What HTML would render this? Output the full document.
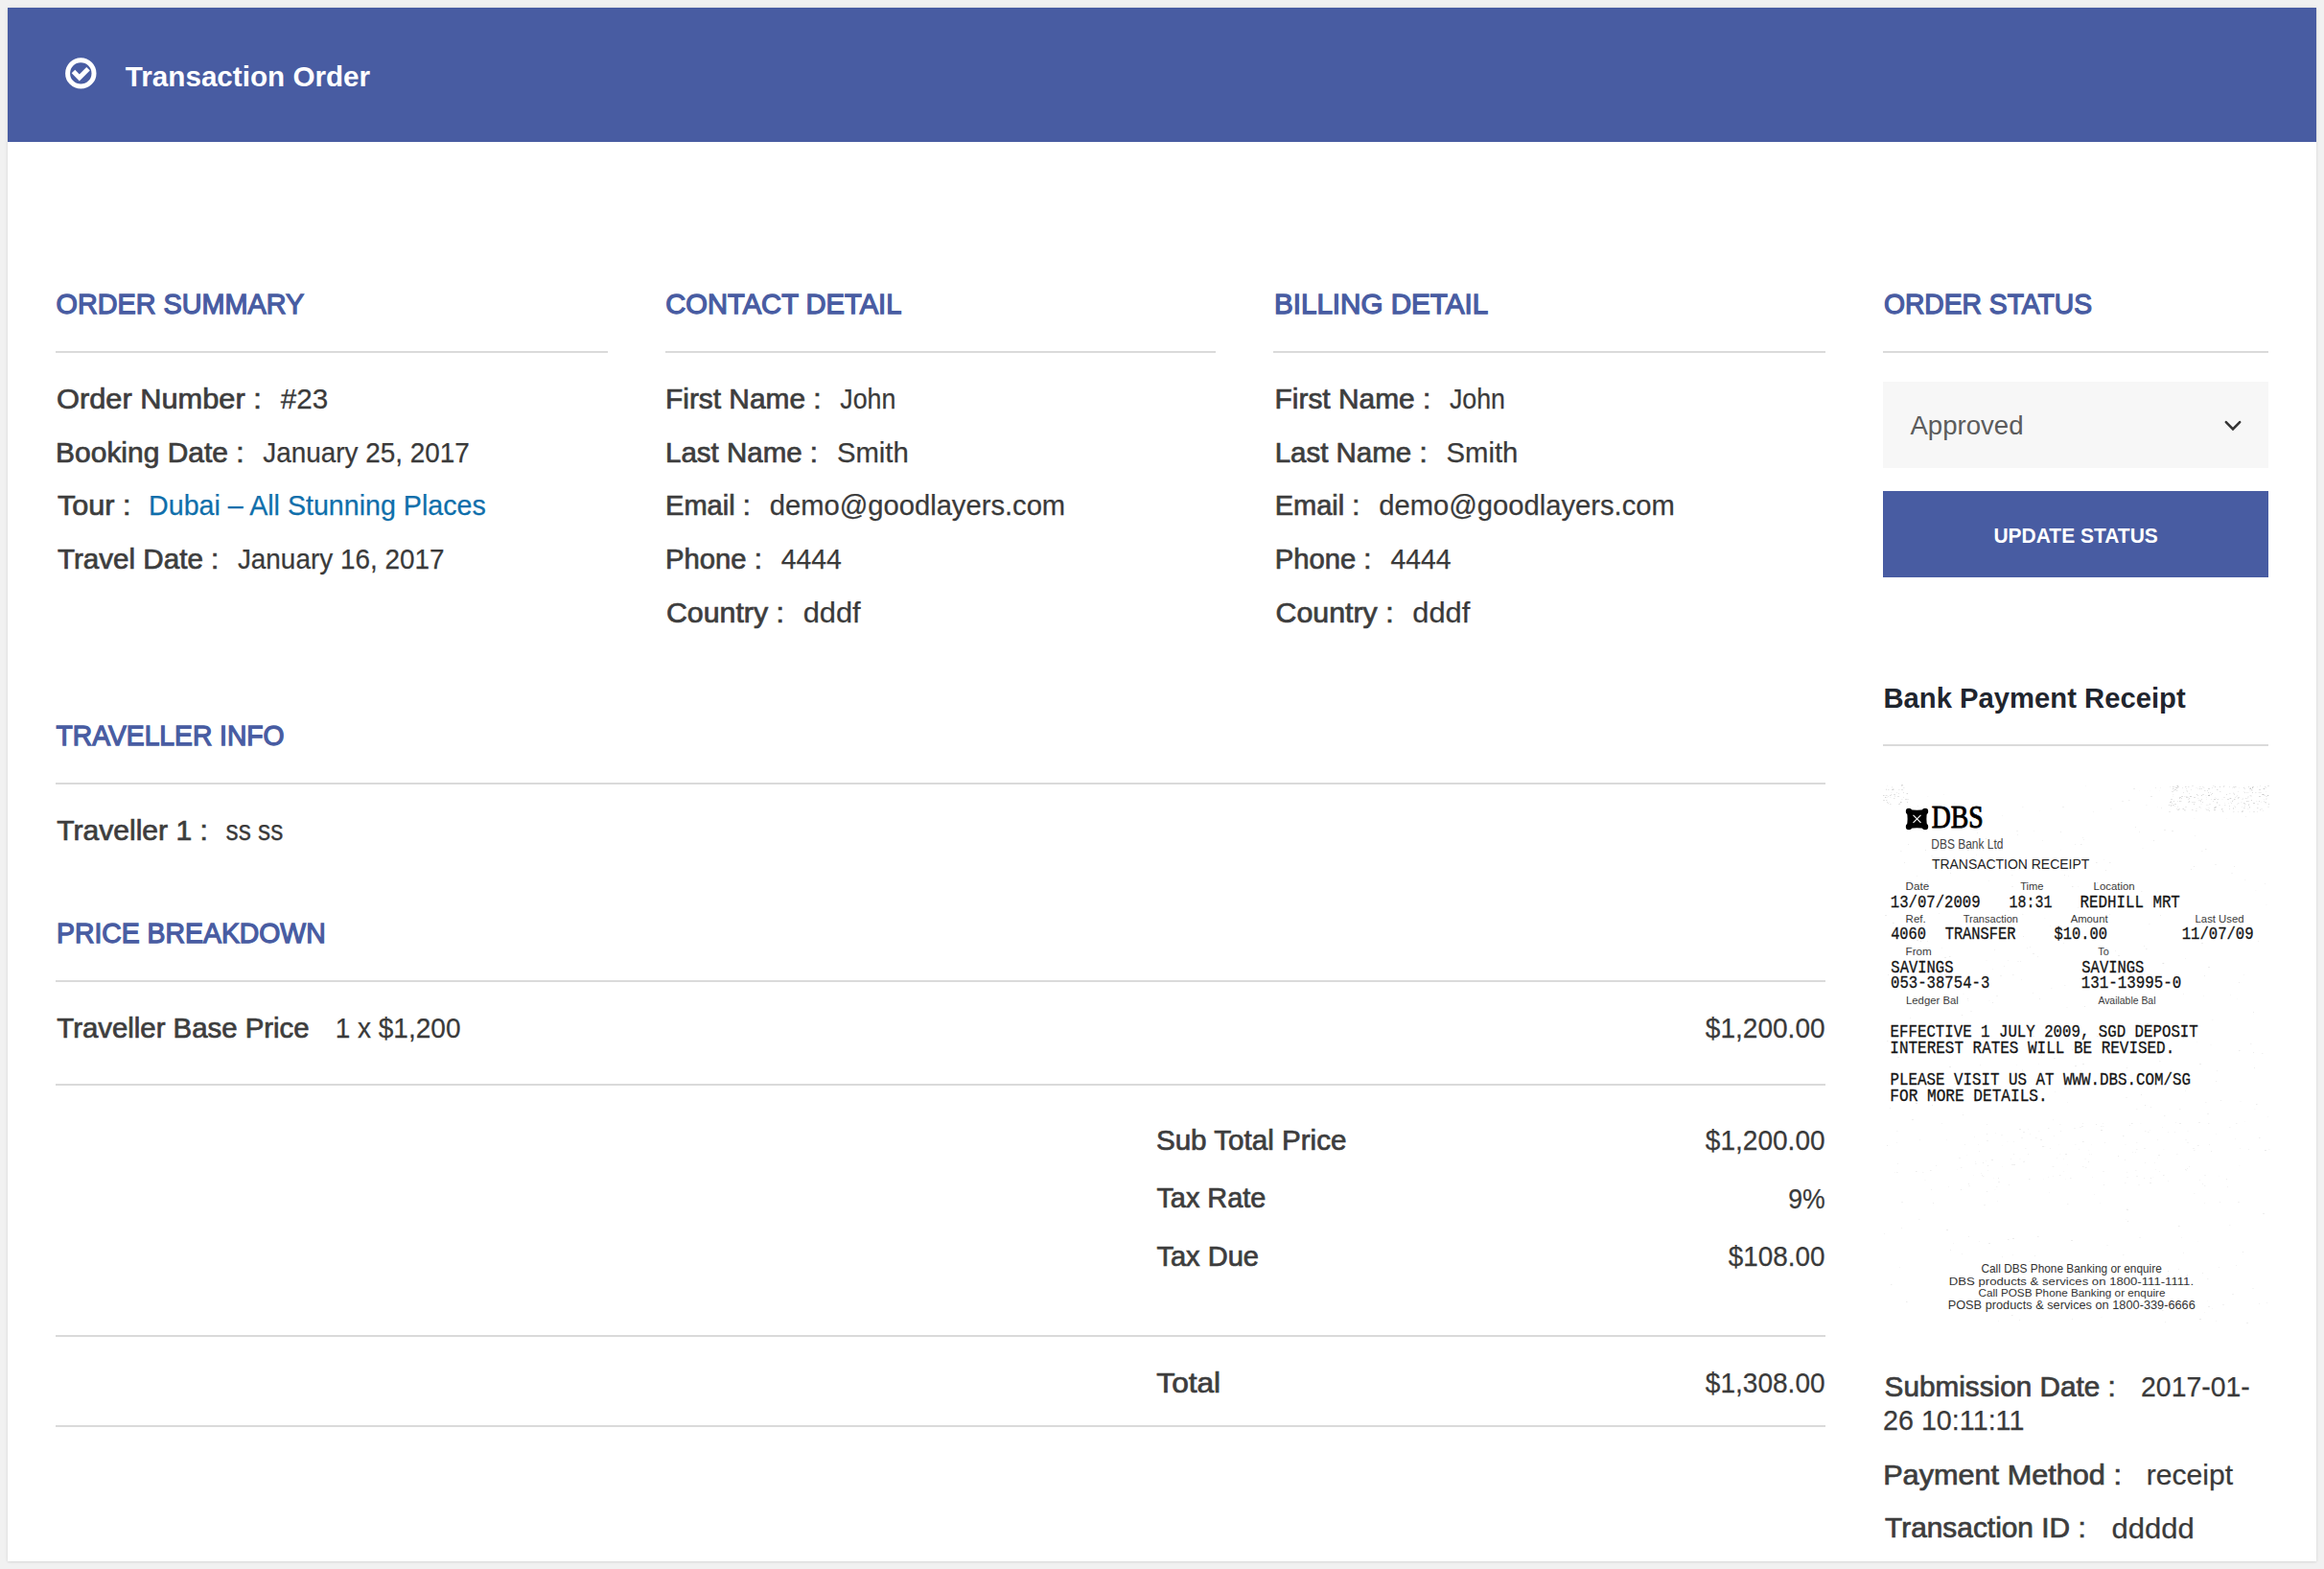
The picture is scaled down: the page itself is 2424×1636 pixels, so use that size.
<!DOCTYPE html>
<html>
<head>
<meta charset="utf-8">
<title>Transaction Order</title>
<style>
html,body{margin:0;padding:0;}
body{width:2424px;height:1636px;background:#f1f1f1;position:relative;overflow:hidden;font-family:"Liberation Sans",sans-serif;}
.box{position:absolute;left:8px;top:8px;width:2408px;height:1620px;background:#fff;box-shadow:0 0 4px rgba(0,0,0,0.09),0 1px 2px rgba(0,0,0,0.06);}
.hdr{position:absolute;left:8px;top:8px;width:2408px;height:140px;background:#485ca2;}
.ln{position:absolute;height:2px;background:#dadada;}
.sel{position:absolute;left:1964px;top:398px;width:402px;height:90px;background:#f7f7f7;}
.btn{position:absolute;left:1964px;top:512px;width:402px;height:90px;background:#485ca2;}
.rcpt{position:absolute;left:1964px;top:818px;width:402px;height:562px;background:#fff;}
svg.t{position:absolute;left:0;top:0;}
</style>
</head>
<body>
<div class="box"></div>
<div class="hdr"></div>
<div class="ln" style="left:58px;top:366px;width:576px"></div>
<div class="ln" style="left:694px;top:366px;width:574px"></div>
<div class="ln" style="left:1328px;top:366px;width:576px"></div>
<div class="ln" style="left:1964px;top:366px;width:402px"></div>
<div class="ln" style="left:58px;top:816px;width:1846px"></div>
<div class="ln" style="left:58px;top:1022px;width:1846px"></div>
<div class="ln" style="left:58px;top:1130px;width:1846px"></div>
<div class="ln" style="left:58px;top:1392px;width:1846px"></div>
<div class="ln" style="left:58px;top:1486px;width:1846px"></div>
<div class="ln" style="left:1964px;top:776px;width:402px"></div>
<div class="sel"></div>
<div class="btn"></div>
<div class="rcpt"></div>
<svg class="t" width="2424" height="1636" viewBox="0 0 2424 1636" font-family="Liberation Sans, sans-serif">
<circle cx="84.3" cy="76.4" r="13.7" fill="none" stroke="#fff" stroke-width="5"/>
<path d="M76.5 74.6 L82.8 80.9 L92 71.7" fill="none" stroke="#fff" stroke-width="5"/>
<path d="M2321.8 440.2 L2329 447.4 L2336.2 440.2" fill="none" stroke="#333" stroke-width="2.5" stroke-linecap="round"/>
<g fill="#000">
<path d="M1990 845 Q1999.5 847.5 2009 845 Q2006.8 854 2009 863 Q1999.5 860.5 1990 863 Q1992.2 854 1990 845 Z" stroke="#000" stroke-width="3" stroke-linejoin="round"/>
<circle cx="1991" cy="846" r="3.2"/><circle cx="2008" cy="846" r="3.2"/><circle cx="1991" cy="862" r="3.2"/><circle cx="2008" cy="862" r="3.2"/>
</g>
<path d="M1995.5 849.8 L2003.5 857.8 M2003.5 849.8 L1995.5 857.8" stroke="#fff" stroke-width="1.1"/>
<g fill="#000"><rect x="2296" y="822" width="1" height="1" fill-opacity="0.11"/><rect x="2347" y="821" width="1" height="1" fill-opacity="0.10"/><rect x="2266" y="830" width="1" height="1" fill-opacity="0.04"/><rect x="2319" y="820" width="1" height="1" fill-opacity="0.10"/><rect x="2328" y="834" width="2" height="1" fill-opacity="0.04"/><rect x="2267" y="824" width="1" height="1" fill-opacity="0.10"/><rect x="2292" y="822" width="1.5" height="1" fill-opacity="0.04"/><rect x="2320" y="837" width="1" height="1" fill-opacity="0.04"/><rect x="2301" y="833" width="1" height="1" fill-opacity="0.04"/><rect x="2326" y="832" width="1.5" height="1" fill-opacity="0.10"/><rect x="2310" y="844" width="1" height="1" fill-opacity="0.07"/><rect x="2345" y="838" width="1.5" height="1" fill-opacity="0.06"/><rect x="2317" y="843" width="1.5" height="1" fill-opacity="0.12"/><rect x="2325" y="820" width="1" height="1" fill-opacity="0.09"/><rect x="2341" y="822" width="1" height="1" fill-opacity="0.09"/><rect x="2362" y="820" width="1.5" height="1" fill-opacity="0.10"/><rect x="2297" y="828" width="2" height="1" fill-opacity="0.09"/><rect x="2269" y="821" width="1" height="1" fill-opacity="0.06"/><rect x="2268" y="838" width="2" height="1" fill-opacity="0.11"/><rect x="2292" y="829" width="1" height="1" fill-opacity="0.11"/><rect x="2360" y="828" width="2" height="1" fill-opacity="0.10"/><rect x="2268" y="840" width="1" height="1" fill-opacity="0.05"/><rect x="2303" y="844" width="1" height="1" fill-opacity="0.09"/><rect x="2309" y="833" width="2" height="1" fill-opacity="0.14"/><rect x="2352" y="826" width="1.5" height="1" fill-opacity="0.08"/><rect x="2333" y="829" width="1" height="1" fill-opacity="0.06"/><rect x="2280" y="824" width="2" height="1" fill-opacity="0.06"/><rect x="2348" y="823" width="1" height="1" fill-opacity="0.07"/><rect x="2306" y="828" width="1" height="1" fill-opacity="0.10"/><rect x="2334" y="832" width="1" height="1" fill-opacity="0.10"/><rect x="2309" y="842" width="2" height="1" fill-opacity="0.14"/><rect x="2303" y="829" width="2" height="1" fill-opacity="0.09"/><rect x="2268" y="820" width="1" height="1" fill-opacity="0.05"/><rect x="2273" y="835" width="1" height="1" fill-opacity="0.04"/><rect x="2318" y="845" width="1" height="1" fill-opacity="0.10"/><rect x="2353" y="835" width="1.5" height="1" fill-opacity="0.05"/><rect x="2361" y="835" width="1" height="1" fill-opacity="0.08"/><rect x="2350" y="846" width="2" height="1" fill-opacity="0.08"/><rect x="2294" y="822" width="1.5" height="1" fill-opacity="0.12"/><rect x="2312" y="837" width="1" height="1" fill-opacity="0.09"/><rect x="2361" y="833" width="1" height="1" fill-opacity="0.05"/><rect x="2341" y="826" width="1" height="1" fill-opacity="0.11"/><rect x="2334" y="825" width="1" height="1" fill-opacity="0.07"/><rect x="2299" y="824" width="1.5" height="1" fill-opacity="0.10"/><rect x="2328" y="835" width="1" height="1" fill-opacity="0.13"/><rect x="2346" y="841" width="1" height="1" fill-opacity="0.12"/><rect x="2283" y="832" width="1" height="1" fill-opacity="0.12"/><rect x="2344" y="831" width="1.5" height="1" fill-opacity="0.05"/><rect x="2309" y="844" width="1.5" height="1" fill-opacity="0.15"/><rect x="2270" y="821" width="1.5" height="1" fill-opacity="0.08"/><rect x="2283" y="835" width="1" height="1" fill-opacity="0.14"/><rect x="2312" y="836" width="1" height="1" fill-opacity="0.13"/><rect x="2349" y="821" width="1" height="1" fill-opacity="0.08"/><rect x="2312" y="823" width="1.5" height="1" fill-opacity="0.13"/><rect x="2271" y="844" width="2" height="1" fill-opacity="0.11"/><rect x="2304" y="845" width="1" height="1" fill-opacity="0.11"/><rect x="2365" y="819" width="2" height="1" fill-opacity="0.10"/><rect x="2346" y="822" width="2" height="1" fill-opacity="0.13"/><rect x="2330" y="828" width="1" height="1" fill-opacity="0.10"/><rect x="2264" y="840" width="1" height="1" fill-opacity="0.12"/><rect x="2317" y="844" width="1" height="1" fill-opacity="0.08"/><rect x="2348" y="824" width="1.5" height="1" fill-opacity="0.06"/><rect x="2314" y="839" width="2" height="1" fill-opacity="0.07"/><rect x="2349" y="820" width="2" height="1" fill-opacity="0.12"/><rect x="2331" y="841" width="1" height="1" fill-opacity="0.09"/><rect x="2317" y="833" width="2" height="1" fill-opacity="0.03"/><rect x="2343" y="835" width="1" height="1" fill-opacity="0.13"/><rect x="2280" y="831" width="1" height="1" fill-opacity="0.12"/><rect x="2296" y="833" width="1" height="1" fill-opacity="0.10"/><rect x="2354" y="820" width="1" height="1" fill-opacity="0.05"/><rect x="2342" y="832" width="1" height="1" fill-opacity="0.10"/><rect x="2308" y="835" width="1" height="1" fill-opacity="0.09"/><rect x="2334" y="831" width="2" height="1" fill-opacity="0.10"/><rect x="2315" y="825" width="1.5" height="1" fill-opacity="0.09"/><rect x="2358" y="843" width="2" height="1" fill-opacity="0.05"/><rect x="2276" y="821" width="1" height="1" fill-opacity="0.08"/><rect x="2332" y="830" width="1.5" height="1" fill-opacity="0.05"/><rect x="2344" y="843" width="1.5" height="1" fill-opacity="0.05"/><rect x="2277" y="843" width="1" height="1" fill-opacity="0.14"/><rect x="2340" y="821" width="1" height="1" fill-opacity="0.14"/><rect x="2365" y="841" width="2" height="1" fill-opacity="0.05"/><rect x="2365" y="829" width="1.5" height="1" fill-opacity="0.08"/><rect x="2295" y="838" width="2" height="1" fill-opacity="0.03"/><rect x="2308" y="819" width="1.5" height="1" fill-opacity="0.07"/><rect x="2315" y="820" width="1" height="1" fill-opacity="0.15"/><rect x="2363" y="821" width="1" height="1" fill-opacity="0.06"/><rect x="2356" y="823" width="2" height="1" fill-opacity="0.12"/><rect x="2350" y="837" width="2" height="1" fill-opacity="0.14"/><rect x="2278" y="844" width="1.5" height="1" fill-opacity="0.10"/><rect x="2271" y="820" width="2" height="1" fill-opacity="0.11"/><rect x="2355" y="826" width="1" height="1" fill-opacity="0.03"/><rect x="2345" y="820" width="1" height="1" fill-opacity="0.13"/><rect x="2290" y="821" width="2" height="1" fill-opacity="0.03"/><rect x="2358" y="826" width="1" height="1" fill-opacity="0.05"/><rect x="2360" y="845" width="1" height="1" fill-opacity="0.06"/><rect x="2283" y="827" width="1" height="1" fill-opacity="0.07"/><rect x="2292" y="832" width="1.5" height="1" fill-opacity="0.05"/><rect x="2346" y="846" width="1" height="1" fill-opacity="0.04"/><rect x="2338" y="833" width="2" height="1" fill-opacity="0.05"/><rect x="2288" y="831" width="2" height="1" fill-opacity="0.11"/><rect x="2330" y="833" width="1.5" height="1" fill-opacity="0.14"/><rect x="2334" y="846" width="1" height="1" fill-opacity="0.07"/><rect x="2304" y="828" width="1" height="1" fill-opacity="0.04"/><rect x="2263" y="836" width="2" height="1" fill-opacity="0.14"/><rect x="2279" y="820" width="1.5" height="1" fill-opacity="0.13"/><rect x="2324" y="837" width="1" height="1" fill-opacity="0.04"/><rect x="2278" y="830" width="1.5" height="1" fill-opacity="0.06"/><rect x="2363" y="833" width="1.5" height="1" fill-opacity="0.06"/><rect x="2285" y="823" width="1" height="1" fill-opacity="0.07"/><rect x="2311" y="832" width="1" height="1" fill-opacity="0.05"/><rect x="2271" y="841" width="1" height="1" fill-opacity="0.05"/><rect x="2303" y="826" width="1" height="1" fill-opacity="0.11"/><rect x="2323" y="833" width="2" height="1" fill-opacity="0.12"/><rect x="2341" y="838" width="1.5" height="1" fill-opacity="0.09"/><rect x="2337" y="836" width="2" height="1" fill-opacity="0.04"/><rect x="2338" y="841" width="1" height="1" fill-opacity="0.05"/><rect x="2348" y="834" width="1" height="1" fill-opacity="0.14"/><rect x="2271" y="819" width="1" height="1" fill-opacity="0.11"/><rect x="2301" y="831" width="1" height="1" fill-opacity="0.04"/><rect x="2327" y="837" width="1" height="1" fill-opacity="0.09"/><rect x="2310" y="820" width="1" height="1" fill-opacity="0.14"/><rect x="2331" y="820" width="1.5" height="1" fill-opacity="0.12"/><rect x="2346" y="842" width="1" height="1" fill-opacity="0.06"/><rect x="2286" y="836" width="2" height="1" fill-opacity="0.08"/><rect x="2270" y="843" width="1" height="1" fill-opacity="0.07"/><rect x="2326" y="836" width="1" height="1" fill-opacity="0.04"/><rect x="2297" y="836" width="1" height="1" fill-opacity="0.11"/><rect x="2263" y="820" width="1" height="1" fill-opacity="0.06"/><rect x="2334" y="837" width="1.5" height="1" fill-opacity="0.07"/><rect x="2310" y="831" width="1" height="1" fill-opacity="0.04"/><rect x="2294" y="820" width="1.5" height="1" fill-opacity="0.08"/><rect x="2310" y="841" width="2" height="1" fill-opacity="0.14"/><rect x="2365" y="829" width="1" height="1" fill-opacity="0.14"/><rect x="2270" y="821" width="1.5" height="1" fill-opacity="0.12"/><rect x="2361" y="822" width="1.5" height="1" fill-opacity="0.13"/><rect x="2354" y="838" width="2" height="1" fill-opacity="0.06"/><rect x="2303" y="822" width="2" height="1" fill-opacity="0.14"/><rect x="2304" y="838" width="2" height="1" fill-opacity="0.08"/><rect x="2295" y="842" width="1.5" height="1" fill-opacity="0.03"/><rect x="2349" y="821" width="1" height="1" fill-opacity="0.14"/><rect x="2356" y="826" width="2" height="1" fill-opacity="0.07"/><rect x="2303" y="842" width="2" height="1" fill-opacity="0.04"/><rect x="2341" y="842" width="1" height="1" fill-opacity="0.07"/><rect x="2349" y="826" width="1" height="1" fill-opacity="0.14"/><rect x="2363" y="830" width="1.5" height="1" fill-opacity="0.07"/><rect x="2344" y="830" width="2" height="1" fill-opacity="0.04"/><rect x="2357" y="844" width="1" height="1" fill-opacity="0.10"/><rect x="2267" y="839" width="1" height="1" fill-opacity="0.08"/><rect x="2329" y="826" width="1" height="1" fill-opacity="0.04"/><rect x="2280" y="830" width="1.5" height="1" fill-opacity="0.07"/><rect x="2339" y="845" width="1" height="1" fill-opacity="0.06"/><rect x="2293" y="834" width="1" height="1" fill-opacity="0.08"/><rect x="2329" y="820" width="2" height="1" fill-opacity="0.09"/><rect x="2319" y="831" width="2" height="1" fill-opacity="0.07"/><rect x="2306" y="833" width="1" height="1" fill-opacity="0.06"/><rect x="2298" y="821" width="1.5" height="1" fill-opacity="0.06"/><rect x="2346" y="824" width="2" height="1" fill-opacity="0.03"/><rect x="2302" y="839" width="1.5" height="1" fill-opacity="0.05"/><rect x="2297" y="820" width="1.5" height="1" fill-opacity="0.07"/><rect x="2275" y="832" width="1" height="1" fill-opacity="0.11"/><rect x="2272" y="843" width="2" height="1" fill-opacity="0.08"/><rect x="2307" y="827" width="1" height="1" fill-opacity="0.13"/><rect x="2275" y="830" width="2" height="1" fill-opacity="0.12"/><rect x="2363" y="832" width="2" height="1" fill-opacity="0.04"/><rect x="2363" y="825" width="1" height="1" fill-opacity="0.04"/><rect x="2278" y="845" width="2" height="1" fill-opacity="0.04"/><rect x="2271" y="840" width="1" height="1" fill-opacity="0.03"/><rect x="2286" y="844" width="1.5" height="1" fill-opacity="0.11"/><rect x="2362" y="836" width="2" height="1" fill-opacity="0.10"/><rect x="2335" y="821" width="1" height="1" fill-opacity="0.04"/><rect x="2302" y="824" width="1" height="1" fill-opacity="0.10"/><rect x="2318" y="846" width="1.5" height="1" fill-opacity="0.07"/><rect x="2329" y="843" width="1" height="1" fill-opacity="0.09"/><rect x="2319" y="819" width="1.5" height="1" fill-opacity="0.08"/><rect x="2268" y="823" width="2" height="1" fill-opacity="0.14"/><rect x="2270" y="824" width="1.5" height="1" fill-opacity="0.08"/><rect x="2286" y="819" width="2" height="1" fill-opacity="0.07"/><rect x="2300" y="829" width="1.5" height="1" fill-opacity="0.03"/><rect x="2339" y="832" width="1" height="1" fill-opacity="0.05"/><rect x="2294" y="841" width="1" height="1" fill-opacity="0.06"/><rect x="2290" y="843" width="2" height="1" fill-opacity="0.04"/><rect x="2325" y="843" width="1" height="1" fill-opacity="0.09"/><rect x="2361" y="822" width="1" height="1" fill-opacity="0.08"/><rect x="2264" y="835" width="1" height="1" fill-opacity="0.08"/><rect x="2281" y="831" width="1.5" height="1" fill-opacity="0.11"/><rect x="2338" y="846" width="1.5" height="1" fill-opacity="0.14"/><rect x="2282" y="836" width="2" height="1" fill-opacity="0.09"/><rect x="2265" y="837" width="1.5" height="1" fill-opacity="0.08"/><rect x="2364" y="830" width="1" height="1" fill-opacity="0.04"/><rect x="2291" y="828" width="1" height="1" fill-opacity="0.14"/><rect x="2320" y="839" width="1.5" height="1" fill-opacity="0.08"/><rect x="2347" y="830" width="2" height="1" fill-opacity="0.04"/><rect x="2282" y="833" width="1.5" height="1" fill-opacity="0.08"/><rect x="2300" y="843" width="2" height="1" fill-opacity="0.04"/><rect x="2288" y="836" width="2" height="1" fill-opacity="0.08"/><rect x="2266" y="820" width="1.5" height="1" fill-opacity="0.14"/><rect x="2282" y="820" width="1.5" height="1" fill-opacity="0.10"/><rect x="2290" y="845" width="1.5" height="1" fill-opacity="0.10"/><rect x="2340" y="837" width="1.5" height="1" fill-opacity="0.14"/><rect x="2262" y="839" width="1" height="1" fill-opacity="0.14"/><rect x="2265" y="825" width="2" height="1" fill-opacity="0.09"/><rect x="2361" y="829" width="2" height="1" fill-opacity="0.06"/><rect x="2347" y="822" width="1" height="1" fill-opacity="0.09"/><rect x="2345" y="839" width="1" height="1" fill-opacity="0.13"/><rect x="2325" y="827" width="1.5" height="1" fill-opacity="0.07"/><rect x="2344" y="835" width="2" height="1" fill-opacity="0.09"/><rect x="2340" y="825" width="1" height="1" fill-opacity="0.04"/><rect x="2312" y="833" width="2" height="1" fill-opacity="0.05"/><rect x="2354" y="846" width="1" height="1" fill-opacity="0.06"/><rect x="2284" y="830" width="2" height="1" fill-opacity="0.15"/><rect x="2280" y="822" width="1" height="1" fill-opacity="0.08"/><rect x="2340" y="842" width="1" height="1" fill-opacity="0.11"/><rect x="2343" y="826" width="1.5" height="1" fill-opacity="0.07"/><rect x="2301" y="839" width="1" height="1" fill-opacity="0.05"/><rect x="2281" y="825" width="1" height="1" fill-opacity="0.07"/><rect x="2296" y="829" width="1" height="1" fill-opacity="0.15"/><rect x="2330" y="821" width="1" height="1" fill-opacity="0.08"/><rect x="2273" y="831" width="2" height="1" fill-opacity="0.13"/><rect x="2357" y="819" width="1" height="1" fill-opacity="0.07"/><rect x="2267" y="835" width="1" height="1" fill-opacity="0.13"/><rect x="2359" y="828" width="2" height="1" fill-opacity="0.13"/><rect x="2325" y="840" width="1" height="1" fill-opacity="0.11"/><rect x="2273" y="835" width="1" height="1" fill-opacity="0.10"/><rect x="2266" y="828" width="1.5" height="1" fill-opacity="0.04"/><rect x="2266" y="839" width="1" height="1" fill-opacity="0.14"/><rect x="2347" y="829" width="1.5" height="1" fill-opacity="0.07"/><rect x="2270" y="819" width="2" height="1" fill-opacity="0.09"/><rect x="2269" y="821" width="1" height="1" fill-opacity="0.08"/><rect x="2328" y="821" width="1.5" height="1" fill-opacity="0.05"/><rect x="2305" y="826" width="1" height="1" fill-opacity="0.07"/><rect x="2294" y="834" width="2" height="1" fill-opacity="0.07"/><rect x="2264" y="839" width="1" height="1" fill-opacity="0.13"/><rect x="2303" y="829" width="2" height="1" fill-opacity="0.14"/><rect x="2356" y="830" width="2" height="1" fill-opacity="0.13"/><rect x="2322" y="828" width="1" height="1" fill-opacity="0.12"/><rect x="2264" y="833" width="2" height="1" fill-opacity="0.11"/><rect x="2271" y="835" width="1" height="1" fill-opacity="0.07"/><rect x="2277" y="826" width="1" height="1" fill-opacity="0.09"/><rect x="2273" y="832" width="1" height="1" fill-opacity="0.13"/><rect x="2293" y="841" width="2" height="1" fill-opacity="0.04"/><rect x="2295" y="835" width="1" height="1" fill-opacity="0.11"/><rect x="2356" y="835" width="1" height="1" fill-opacity="0.13"/><rect x="2329" y="842" width="1" height="1" fill-opacity="0.10"/><rect x="2348" y="823" width="2" height="1" fill-opacity="0.05"/><rect x="2360" y="822" width="1" height="1" fill-opacity="0.07"/><rect x="2288" y="838" width="1" height="1" fill-opacity="0.14"/><rect x="2354" y="842" width="1.5" height="1" fill-opacity="0.11"/><rect x="2274" y="835" width="1.5" height="1" fill-opacity="0.10"/><rect x="2329" y="827" width="2" height="1" fill-opacity="0.06"/><rect x="2331" y="831" width="1" height="1" fill-opacity="0.08"/><rect x="2262" y="846" width="2" height="1" fill-opacity="0.08"/><rect x="2341" y="840" width="1" height="1" fill-opacity="0.08"/><rect x="2346" y="829" width="1.5" height="1" fill-opacity="0.04"/><rect x="2307" y="821" width="1" height="1" fill-opacity="0.08"/><rect x="2266" y="822" width="1.5" height="1" fill-opacity="0.14"/><rect x="2343" y="832" width="2" height="1" fill-opacity="0.04"/><rect x="2330" y="840" width="1" height="1" fill-opacity="0.04"/><rect x="2366" y="838" width="1" height="1" fill-opacity="0.13"/><rect x="2276" y="843" width="1" height="1" fill-opacity="0.07"/><rect x="2333" y="838" width="1.5" height="1" fill-opacity="0.05"/><rect x="1980" y="823" width="1.5" height="1" fill-opacity="0.07"/><rect x="1988" y="827" width="2" height="1" fill-opacity="0.06"/><rect x="1969" y="823" width="1.5" height="1" fill-opacity="0.09"/><rect x="1974" y="822" width="1.5" height="1" fill-opacity="0.08"/><rect x="1982" y="836" width="1.5" height="1" fill-opacity="0.05"/><rect x="1967" y="829" width="1.5" height="1" fill-opacity="0.11"/><rect x="1989" y="827" width="1" height="1" fill-opacity="0.09"/><rect x="1971" y="829" width="1.5" height="1" fill-opacity="0.13"/><rect x="1971" y="838" width="1.5" height="1" fill-opacity="0.10"/><rect x="1973" y="820" width="1" height="1" fill-opacity="0.06"/><rect x="1972" y="828" width="1.5" height="1" fill-opacity="0.07"/><rect x="1983" y="833" width="1.5" height="1" fill-opacity="0.05"/><rect x="1980" y="827" width="1" height="1" fill-opacity="0.09"/><rect x="1967" y="823" width="1" height="1" fill-opacity="0.11"/><rect x="1965" y="829" width="1.5" height="1" fill-opacity="0.07"/><rect x="1978" y="826" width="1" height="1" fill-opacity="0.07"/><rect x="1969" y="830" width="1" height="1" fill-opacity="0.08"/><rect x="1964" y="834" width="2" height="1" fill-opacity="0.11"/><rect x="1966" y="831" width="1.5" height="1" fill-opacity="0.13"/><rect x="1974" y="823" width="1.5" height="1" fill-opacity="0.03"/><rect x="1979" y="830" width="2" height="1" fill-opacity="0.10"/><rect x="1970" y="836" width="1" height="1" fill-opacity="0.04"/><rect x="1975" y="823" width="1" height="1" fill-opacity="0.04"/><rect x="1964" y="829" width="1" height="1" fill-opacity="0.14"/><rect x="1975" y="828" width="2" height="1" fill-opacity="0.11"/><rect x="1985" y="821" width="1.5" height="1" fill-opacity="0.07"/><rect x="1980" y="838" width="2" height="1" fill-opacity="0.11"/><rect x="1983" y="818" width="2" height="1" fill-opacity="0.13"/><rect x="1966" y="831" width="1" height="1" fill-opacity="0.05"/><rect x="1971" y="831" width="1.5" height="1" fill-opacity="0.04"/><rect x="1983" y="823" width="2" height="1" fill-opacity="0.10"/><rect x="1982" y="836" width="1.5" height="1" fill-opacity="0.14"/><rect x="1981" y="837" width="1" height="1" fill-opacity="0.05"/><rect x="1968" y="836" width="1" height="1" fill-opacity="0.13"/><rect x="1989" y="833" width="2" height="1" fill-opacity="0.07"/><rect x="1973" y="823" width="2" height="1" fill-opacity="0.14"/><rect x="1976" y="829" width="1" height="1" fill-opacity="0.03"/><rect x="1975" y="832" width="1.5" height="1" fill-opacity="0.10"/><rect x="1985" y="826" width="1" height="1" fill-opacity="0.10"/><rect x="1968" y="819" width="1" height="1" fill-opacity="0.04"/><rect x="1973" y="821" width="1" height="1" fill-opacity="0.04"/><rect x="1968" y="831" width="1" height="1" fill-opacity="0.04"/><rect x="1983" y="819" width="1.5" height="1" fill-opacity="0.10"/><rect x="1969" y="837" width="1" height="1" fill-opacity="0.10"/><rect x="1987" y="833" width="2" height="1" fill-opacity="0.11"/><rect x="1967" y="822" width="1" height="1" fill-opacity="0.04"/><rect x="1989" y="836" width="1" height="1" fill-opacity="0.12"/><rect x="1985" y="831" width="1" height="1" fill-opacity="0.07"/><rect x="1967" y="834" width="1.5" height="1" fill-opacity="0.11"/><rect x="1972" y="826" width="1.5" height="1" fill-opacity="0.03"/><rect x="2338" y="845" width="1.5" height="1" fill-opacity="0.07"/><rect x="2273" y="1156" width="1.5" height="1" fill-opacity="0.05"/><rect x="2213" y="835" width="2" height="1" fill-opacity="0.05"/><rect x="2172" y="873" width="1" height="1" fill-opacity="0.05"/><rect x="2180" y="940" width="1" height="1" fill-opacity="0.07"/><rect x="2195" y="979" width="1" height="1" fill-opacity="0.05"/><rect x="2080" y="1240" width="1.5" height="1" fill-opacity="0.02"/><rect x="2161" y="1094" width="1" height="1" fill-opacity="0.07"/><rect x="2353" y="1151" width="1.5" height="1" fill-opacity="0.08"/><rect x="2196" y="907" width="1" height="1" fill-opacity="0.07"/><rect x="2164" y="880" width="1" height="1" fill-opacity="0.06"/><rect x="2161" y="1375" width="1" height="1" fill-opacity="0.05"/><rect x="2216" y="1018" width="2" height="1" fill-opacity="0.04"/><rect x="2323" y="1237" width="1" height="1" fill-opacity="0.05"/><rect x="2114" y="988" width="1" height="1" fill-opacity="0.05"/><rect x="2116" y="1315" width="2" height="1" fill-opacity="0.04"/><rect x="2015" y="1152" width="1" height="1" fill-opacity="0.07"/><rect x="2104" y="1002" width="2" height="1" fill-opacity="0.03"/><rect x="2230" y="1235" width="2" height="1" fill-opacity="0.03"/><rect x="2241" y="963" width="1.5" height="1" fill-opacity="0.04"/><rect x="2150" y="1315" width="1" height="1" fill-opacity="0.04"/><rect x="2072" y="1242" width="1" height="1" fill-opacity="0.07"/><rect x="2255" y="1366" width="1.5" height="1" fill-opacity="0.07"/><rect x="2029" y="1002" width="1" height="1" fill-opacity="0.03"/><rect x="2030" y="1188" width="1" height="1" fill-opacity="0.03"/><rect x="2360" y="1265" width="2" height="1" fill-opacity="0.07"/><rect x="2074" y="879" width="1.5" height="1" fill-opacity="0.08"/><rect x="2047" y="1036" width="2" height="1" fill-opacity="0.02"/><rect x="2307" y="1063" width="1.5" height="1" fill-opacity="0.03"/><rect x="2150" y="898" width="2" height="1" fill-opacity="0.06"/><rect x="1966" y="954" width="2" height="1" fill-opacity="0.07"/><rect x="2304" y="1193" width="1" height="1" fill-opacity="0.06"/><rect x="2237" y="1179" width="1.5" height="1" fill-opacity="0.05"/><rect x="2068" y="1212" width="1" height="1" fill-opacity="0.08"/><rect x="2279" y="1219" width="1.5" height="1" fill-opacity="0.06"/><rect x="2305" y="1089" width="2" height="1" fill-opacity="0.02"/><rect x="2172" y="1190" width="1.5" height="1" fill-opacity="0.08"/><rect x="2277" y="1036" width="1" height="1" fill-opacity="0.05"/><rect x="1979" y="1123" width="1" height="1" fill-opacity="0.03"/><rect x="2173" y="875" width="1" height="1" fill-opacity="0.05"/><rect x="2252" y="1106" width="1.5" height="1" fill-opacity="0.06"/><rect x="2174" y="1049" width="1" height="1" fill-opacity="0.08"/><rect x="2362" y="921" width="1" height="1" fill-opacity="0.05"/><rect x="2257" y="1163" width="1.5" height="1" fill-opacity="0.06"/><rect x="2074" y="1043" width="2" height="1" fill-opacity="0.02"/><rect x="2332" y="1171" width="1.5" height="1" fill-opacity="0.06"/><rect x="2008" y="989" width="1" height="1" fill-opacity="0.04"/><rect x="2364" y="1358" width="1" height="1" fill-opacity="0.05"/><rect x="2016" y="1254" width="1" height="1" fill-opacity="0.07"/><rect x="2153" y="1134" width="1" height="1" fill-opacity="0.03"/><rect x="2106" y="1177" width="2" height="1" fill-opacity="0.07"/><rect x="2152" y="983" width="1" height="1" fill-opacity="0.05"/><rect x="2277" y="1082" width="1" height="1" fill-opacity="0.07"/><rect x="2072" y="1029" width="2" height="1" fill-opacity="0.04"/><rect x="2237" y="1089" width="1.5" height="1" fill-opacity="0.07"/><rect x="2108" y="1186" width="2" height="1" fill-opacity="0.04"/><rect x="2136" y="1176" width="1.5" height="1" fill-opacity="0.06"/><rect x="2025" y="988" width="1" height="1" fill-opacity="0.04"/><rect x="2297" y="1327" width="1" height="1" fill-opacity="0.07"/><rect x="2177" y="1012" width="1" height="1" fill-opacity="0.05"/><rect x="2048" y="858" width="1" height="1" fill-opacity="0.04"/><rect x="2197" y="1298" width="2" height="1" fill-opacity="0.03"/><rect x="2103" y="904" width="1" height="1" fill-opacity="0.08"/><rect x="2209" y="1205" width="1" height="1" fill-opacity="0.08"/><rect x="2233" y="1320" width="1.5" height="1" fill-opacity="0.07"/><rect x="2043" y="1207" width="2" height="1" fill-opacity="0.05"/><rect x="2234" y="884" width="2" height="1" fill-opacity="0.02"/><rect x="2058" y="896" width="1" height="1" fill-opacity="0.05"/><rect x="2159" y="1327" width="1" height="1" fill-opacity="0.07"/><rect x="2164" y="1121" width="1" height="1" fill-opacity="0.07"/><rect x="2028" y="998" width="2" height="1" fill-opacity="0.07"/><rect x="2231" y="1290" width="2" height="1" fill-opacity="0.04"/><rect x="2366" y="1198" width="1.5" height="1" fill-opacity="0.03"/><rect x="2220" y="834" width="1.5" height="1" fill-opacity="0.06"/><rect x="2289" y="871" width="1" height="1" fill-opacity="0.05"/><rect x="1978" y="1222" width="1.5" height="1" fill-opacity="0.06"/><rect x="2002" y="1188" width="1" height="1" fill-opacity="0.04"/><rect x="2078" y="1010" width="1" height="1" fill-opacity="0.04"/><rect x="2296" y="983" width="2" height="1" fill-opacity="0.07"/><rect x="2098" y="1371" width="1.5" height="1" fill-opacity="0.08"/><rect x="2356" y="1186" width="1.5" height="1" fill-opacity="0.07"/><rect x="2041" y="1219" width="1" height="1" fill-opacity="0.02"/><rect x="2279" y="841" width="2" height="1" fill-opacity="0.07"/><rect x="2183" y="846" width="1" height="1" fill-opacity="0.04"/><rect x="1983" y="1280" width="1" height="1" fill-opacity="0.05"/><rect x="2281" y="1329" width="1" height="1" fill-opacity="0.06"/><rect x="2216" y="1209" width="1" height="1" fill-opacity="0.06"/><rect x="2049" y="1193" width="1" height="1" fill-opacity="0.05"/><rect x="2005" y="920" width="1" height="1" fill-opacity="0.02"/><rect x="2331" y="1187" width="1" height="1" fill-opacity="0.04"/><rect x="2280" y="1134" width="1.5" height="1" fill-opacity="0.04"/><rect x="2038" y="837" width="1" height="1" fill-opacity="0.02"/><rect x="2164" y="1111" width="2" height="1" fill-opacity="0.07"/><rect x="2195" y="1334" width="1" height="1" fill-opacity="0.05"/><rect x="2237" y="1152" width="1" height="1" fill-opacity="0.08"/><rect x="2155" y="1050" width="2" height="1" fill-opacity="0.02"/><rect x="2049" y="903" width="1" height="1" fill-opacity="0.02"/><rect x="1968" y="1194" width="1" height="1" fill-opacity="0.08"/><rect x="2052" y="886" width="1.5" height="1" fill-opacity="0.05"/><rect x="2253" y="954" width="1" height="1" fill-opacity="0.07"/><rect x="2335" y="1024" width="1" height="1" fill-opacity="0.07"/><rect x="2257" y="865" width="2" height="1" fill-opacity="0.06"/><rect x="2149" y="1342" width="1" height="1" fill-opacity="0.04"/><rect x="2252" y="824" width="1" height="1" fill-opacity="0.02"/><rect x="2120" y="994" width="2" height="1" fill-opacity="0.06"/><rect x="2209" y="996" width="2" height="1" fill-opacity="0.08"/><rect x="2153" y="912" width="1" height="1" fill-opacity="0.08"/><rect x="2110" y="1180" width="2" height="1" fill-opacity="0.06"/><rect x="2156" y="1255" width="1.5" height="1" fill-opacity="0.05"/><rect x="2279" y="1137" width="1" height="1" fill-opacity="0.04"/><rect x="2214" y="1184" width="1.5" height="1" fill-opacity="0.07"/><rect x="2314" y="1226" width="1" height="1" fill-opacity="0.02"/><rect x="2206" y="991" width="1" height="1" fill-opacity="0.05"/><rect x="2115" y="1203" width="1" height="1" fill-opacity="0.06"/><rect x="2289" y="977" width="1.5" height="1" fill-opacity="0.02"/><rect x="2072" y="906" width="1" height="1" fill-opacity="0.08"/><rect x="2080" y="897" width="1" height="1" fill-opacity="0.08"/><rect x="2074" y="1296" width="2" height="1" fill-opacity="0.07"/><rect x="2103" y="866" width="2" height="1" fill-opacity="0.05"/><rect x="2045" y="1240" width="1" height="1" fill-opacity="0.08"/><rect x="2088" y="850" width="1" height="1" fill-opacity="0.04"/><rect x="2336" y="1148" width="2" height="1" fill-opacity="0.02"/><rect x="2149" y="867" width="1" height="1" fill-opacity="0.07"/><rect x="2058" y="1144" width="1.5" height="1" fill-opacity="0.08"/><rect x="2156" y="1149" width="1" height="1" fill-opacity="0.03"/><rect x="2001" y="1271" width="1.5" height="1" fill-opacity="0.04"/><rect x="2126" y="1109" width="1" height="1" fill-opacity="0.03"/><rect x="2335" y="1095" width="1.5" height="1" fill-opacity="0.08"/><rect x="2218" y="1260" width="1" height="1" fill-opacity="0.03"/><rect x="2103" y="1110" width="1" height="1" fill-opacity="0.02"/><rect x="2046" y="1307" width="1" height="1" fill-opacity="0.05"/><rect x="2069" y="1256" width="2" height="1" fill-opacity="0.05"/><rect x="2272" y="1278" width="1.5" height="1" fill-opacity="0.08"/><rect x="2303" y="1008" width="2" height="1" fill-opacity="0.08"/><rect x="1998" y="847" width="2" height="1" fill-opacity="0.05"/><rect x="2160" y="1293" width="2" height="1" fill-opacity="0.08"/><rect x="2335" y="1215" width="1.5" height="1" fill-opacity="0.02"/><rect x="2191" y="1178" width="2" height="1" fill-opacity="0.08"/><rect x="2037" y="1296" width="1" height="1" fill-opacity="0.04"/><rect x="2363" y="943" width="1.5" height="1" fill-opacity="0.02"/><rect x="2342" y="851" width="1" height="1" fill-opacity="0.05"/><rect x="2301" y="844" width="2" height="1" fill-opacity="0.07"/><rect x="1986" y="899" width="1" height="1" fill-opacity="0.07"/><rect x="2236" y="986" width="1" height="1" fill-opacity="0.06"/><rect x="2153" y="1027" width="1.5" height="1" fill-opacity="0.04"/><rect x="2157" y="913" width="1" height="1" fill-opacity="0.04"/><rect x="2332" y="1319" width="1" height="1" fill-opacity="0.05"/><rect x="2285" y="906" width="1" height="1" fill-opacity="0.07"/><rect x="2339" y="1305" width="1" height="1" fill-opacity="0.08"/><rect x="2277" y="1356" width="2" height="1" fill-opacity="0.08"/><rect x="2303" y="1171" width="1.5" height="1" fill-opacity="0.05"/><rect x="2094" y="949" width="1.5" height="1" fill-opacity="0.02"/><rect x="2021" y="943" width="2" height="1" fill-opacity="0.02"/><rect x="2186" y="899" width="1.5" height="1" fill-opacity="0.08"/><rect x="2132" y="957" width="1.5" height="1" fill-opacity="0.02"/><rect x="2098" y="912" width="1.5" height="1" fill-opacity="0.05"/><rect x="2147" y="1089" width="1" height="1" fill-opacity="0.03"/><rect x="2218" y="1261" width="2" height="1" fill-opacity="0.08"/><rect x="2300" y="885" width="1.5" height="1" fill-opacity="0.07"/><rect x="2138" y="965" width="1" height="1" fill-opacity="0.04"/><rect x="2003" y="981" width="1" height="1" fill-opacity="0.08"/><rect x="2299" y="1368" width="1" height="1" fill-opacity="0.03"/><rect x="2142" y="1103" width="2" height="1" fill-opacity="0.05"/><rect x="1965" y="1286" width="1" height="1" fill-opacity="0.05"/><rect x="2109" y="841" width="1.5" height="1" fill-opacity="0.04"/><rect x="2194" y="896" width="1" height="1" fill-opacity="0.03"/><rect x="2250" y="929" width="1" height="1" fill-opacity="0.02"/><rect x="2322" y="1229" width="1" height="1" fill-opacity="0.07"/><rect x="2047" y="1162" width="1" height="1" fill-opacity="0.07"/><rect x="2198" y="932" width="2" height="1" fill-opacity="0.02"/><rect x="2302" y="1333" width="1.5" height="1" fill-opacity="0.05"/><rect x="2099" y="1291" width="2" height="1" fill-opacity="0.08"/><rect x="2000" y="1048" width="1" height="1" fill-opacity="0.07"/><rect x="2315" y="968" width="1.5" height="1" fill-opacity="0.03"/><rect x="1979" y="1213" width="1" height="1" fill-opacity="0.05"/><rect x="2107" y="1342" width="1" height="1" fill-opacity="0.08"/><rect x="2013" y="1220" width="1.5" height="1" fill-opacity="0.07"/><rect x="2277" y="1306" width="1" height="1" fill-opacity="0.05"/><rect x="2081" y="879" width="2" height="1" fill-opacity="0.07"/><rect x="2170" y="1116" width="1" height="1" fill-opacity="0.05"/><rect x="2062" y="868" width="1" height="1" fill-opacity="0.06"/><rect x="2005" y="959" width="1" height="1" fill-opacity="0.07"/><rect x="1972" y="1339" width="1.5" height="1" fill-opacity="0.07"/><rect x="1971" y="1155" width="1" height="1" fill-opacity="0.05"/><rect x="2246" y="876" width="1" height="1" fill-opacity="0.08"/><rect x="1982" y="887" width="1.5" height="1" fill-opacity="0.05"/><rect x="2008" y="886" width="1" height="1" fill-opacity="0.08"/><rect x="2310" y="901" width="2" height="1" fill-opacity="0.05"/><rect x="2030" y="1282" width="2" height="1" fill-opacity="0.08"/><rect x="2243" y="1154" width="1" height="1" fill-opacity="0.06"/><rect x="2123" y="1347" width="1.5" height="1" fill-opacity="0.07"/><rect x="2125" y="1289" width="1.5" height="1" fill-opacity="0.07"/><rect x="2292" y="1294" width="1" height="1" fill-opacity="0.02"/><rect x="2349" y="1343" width="2" height="1" fill-opacity="0.04"/><rect x="2231" y="824" width="1" height="1" fill-opacity="0.02"/><rect x="1992" y="1061" width="1" height="1" fill-opacity="0.05"/><rect x="2055" y="1054" width="2" height="1" fill-opacity="0.04"/><rect x="2219" y="1273" width="1" height="1" fill-opacity="0.08"/><rect x="1978" y="1179" width="1.5" height="1" fill-opacity="0.04"/><rect x="2217" y="1271" width="1" height="1" fill-opacity="0.02"/><rect x="2065" y="1110" width="1" height="1" fill-opacity="0.05"/><rect x="2080" y="990" width="1" height="1" fill-opacity="0.06"/><rect x="1988" y="1357" width="1.5" height="1" fill-opacity="0.08"/><rect x="1998" y="1150" width="2" height="1" fill-opacity="0.08"/><rect x="2014" y="892" width="2" height="1" fill-opacity="0.04"/><rect x="2196" y="972" width="1.5" height="1" fill-opacity="0.07"/><rect x="2302" y="1161" width="2" height="1" fill-opacity="0.05"/><rect x="2045" y="1217" width="1.5" height="1" fill-opacity="0.05"/><rect x="2210" y="1082" width="1" height="1" fill-opacity="0.04"/><rect x="2098" y="924" width="2" height="1" fill-opacity="0.05"/><rect x="1969" y="1016" width="1" height="1" fill-opacity="0.07"/><rect x="2094" y="1001" width="1" height="1" fill-opacity="0.04"/><rect x="2083" y="1252" width="1" height="1" fill-opacity="0.03"/><rect x="2208" y="1014" width="2" height="1" fill-opacity="0.06"/><rect x="2299" y="1017" width="1" height="1" fill-opacity="0.07"/><rect x="2362" y="1199" width="2" height="1" fill-opacity="0.08"/><rect x="2099" y="1016" width="1.5" height="1" fill-opacity="0.06"/><rect x="2294" y="1109" width="2" height="1" fill-opacity="0.07"/><rect x="2072" y="1172" width="1" height="1" fill-opacity="0.06"/><rect x="2130" y="876" width="1" height="1" fill-opacity="0.05"/><rect x="2164" y="1359" width="2" height="1" fill-opacity="0.05"/><rect x="2306" y="975" width="1" height="1" fill-opacity="0.06"/><rect x="2117" y="1072" width="1.5" height="1" fill-opacity="0.05"/><rect x="2082" y="1038" width="2" height="1" fill-opacity="0.05"/><rect x="2225" y="822" width="2" height="1" fill-opacity="0.07"/><rect x="2117" y="987" width="1" height="1" fill-opacity="0.05"/><rect x="2139" y="1030" width="1.5" height="1" fill-opacity="0.04"/><rect x="2094" y="1292" width="1.5" height="1" fill-opacity="0.07"/><rect x="2046" y="1058" width="1" height="1" fill-opacity="0.08"/><rect x="1974" y="962" width="1.5" height="1" fill-opacity="0.08"/><rect x="2334" y="1253" width="2" height="1" fill-opacity="0.05"/><rect x="2172" y="1109" width="2" height="1" fill-opacity="0.07"/><rect x="2151" y="841" width="2" height="1" fill-opacity="0.06"/><rect x="2345" y="1198" width="1" height="1" fill-opacity="0.05"/><rect x="2129" y="1100" width="1" height="1" fill-opacity="0.06"/><rect x="2318" y="1360" width="2" height="1" fill-opacity="0.05"/><rect x="2272" y="1323" width="1" height="1" fill-opacity="0.05"/><rect x="2033" y="997" width="1.5" height="1" fill-opacity="0.08"/><rect x="2170" y="880" width="1.5" height="1" fill-opacity="0.08"/><rect x="2294" y="1375" width="2" height="1" fill-opacity="0.08"/><rect x="2218" y="1113" width="1" height="1" fill-opacity="0.07"/><rect x="2167" y="924" width="1" height="1" fill-opacity="0.03"/><rect x="2106" y="1376" width="1" height="1" fill-opacity="0.06"/><rect x="2242" y="824" width="1" height="1" fill-opacity="0.02"/><rect x="2333" y="1041" width="1" height="1" fill-opacity="0.02"/><rect x="2233" y="929" width="1.5" height="1" fill-opacity="0.05"/><rect x="2314" y="1321" width="1" height="1" fill-opacity="0.05"/><rect x="2195" y="1049" width="1" height="1" fill-opacity="0.02"/><rect x="2172" y="1104" width="1" height="1" fill-opacity="0.02"/><rect x="2033" y="1112" width="2" height="1" fill-opacity="0.07"/><rect x="2288" y="853" width="1.5" height="1" fill-opacity="0.02"/><rect x="2022" y="952" width="1" height="1" fill-opacity="0.04"/><rect x="2071" y="874" width="1" height="1" fill-opacity="0.08"/><rect x="2104" y="1071" width="1" height="1" fill-opacity="0.04"/><rect x="2052" y="1041" width="1" height="1" fill-opacity="0.07"/><rect x="2141" y="1167" width="1" height="1" fill-opacity="0.04"/><rect x="2028" y="1148" width="1" height="1" fill-opacity="0.03"/><rect x="2325" y="1277" width="1.5" height="1" fill-opacity="0.04"/><rect x="2350" y="1097" width="1" height="1" fill-opacity="0.08"/><rect x="2236" y="1197" width="2" height="1" fill-opacity="0.05"/><rect x="2088" y="1310" width="1" height="1" fill-opacity="0.05"/><rect x="1999" y="913" width="1" height="1" fill-opacity="0.04"/><rect x="2355" y="981" width="1" height="1" fill-opacity="0.05"/><rect x="2099" y="1308" width="1" height="1" fill-opacity="0.04"/><rect x="2350" y="1055" width="1" height="1" fill-opacity="0.08"/><rect x="2120" y="1080" width="2" height="1" fill-opacity="0.04"/><rect x="1978" y="1191" width="1" height="1" fill-opacity="0.04"/><rect x="2061" y="891" width="1" height="1" fill-opacity="0.03"/><rect x="2187" y="1080" width="1" height="1" fill-opacity="0.07"/><rect x="2028" y="1016" width="2" height="1" fill-opacity="0.07"/><rect x="2217" y="1144" width="2" height="1" fill-opacity="0.04"/><rect x="2167" y="946" width="1" height="1" fill-opacity="0.05"/><rect x="2343" y="1379" width="2" height="1" fill-opacity="0.06"/><rect x="2200" y="1025" width="1" height="1" fill-opacity="0.04"/><rect x="2014" y="1240" width="1" height="1" fill-opacity="0.06"/><rect x="2182" y="970" width="2" height="1" fill-opacity="0.07"/><rect x="1976" y="1222" width="1" height="1" fill-opacity="0.03"/><rect x="2121" y="866" width="1" height="1" fill-opacity="0.03"/><rect x="2093" y="1190" width="1.5" height="1" fill-opacity="0.02"/><rect x="2288" y="1244" width="1.5" height="1" fill-opacity="0.03"/><rect x="1999" y="980" width="2" height="1" fill-opacity="0.07"/><rect x="2078" y="1045" width="1" height="1" fill-opacity="0.08"/><rect x="2341" y="917" width="1.5" height="1" fill-opacity="0.04"/><rect x="2325" y="832" width="2" height="1" fill-opacity="0.07"/><rect x="2064" y="1294" width="1" height="1" fill-opacity="0.04"/><rect x="2037" y="883" width="1" height="1" fill-opacity="0.08"/><rect x="2250" y="841" width="1" height="1" fill-opacity="0.02"/><rect x="2137" y="1243" width="1" height="1" fill-opacity="0.03"/><rect x="2186" y="1172" width="1" height="1" fill-opacity="0.08"/><rect x="2193" y="1221" width="2" height="1" fill-opacity="0.04"/><rect x="2233" y="1141" width="1" height="1" fill-opacity="0.08"/><rect x="2299" y="1254" width="1" height="1" fill-opacity="0.04"/><rect x="2316" y="1147" width="1" height="1" fill-opacity="0.07"/><rect x="2238" y="839" width="1.5" height="1" fill-opacity="0.04"/><rect x="2265" y="866" width="2" height="1" fill-opacity="0.07"/><rect x="2365" y="1164" width="1" height="1" fill-opacity="0.03"/><rect x="2104" y="1352" width="1.5" height="1" fill-opacity="0.05"/><rect x="2242" y="1233" width="2" height="1" fill-opacity="0.07"/><rect x="2168" y="1198" width="1" height="1" fill-opacity="0.03"/><rect x="2161" y="924" width="1.5" height="1" fill-opacity="0.08"/><rect x="2034" y="910" width="1" height="1" fill-opacity="0.07"/><rect x="2183" y="958" width="1.5" height="1" fill-opacity="0.02"/><rect x="2104" y="870" width="1" height="1" fill-opacity="0.06"/><rect x="2019" y="1215" width="1" height="1" fill-opacity="0.06"/><rect x="2248" y="821" width="1" height="1" fill-opacity="0.07"/><rect x="2340" y="1016" width="1" height="1" fill-opacity="0.04"/><rect x="2200" y="953" width="1" height="1" fill-opacity="0.06"/><rect x="2184" y="1245" width="1" height="1" fill-opacity="0.03"/><rect x="2205" y="1077" width="1" height="1" fill-opacity="0.07"/><rect x="2010" y="981" width="1" height="1" fill-opacity="0.04"/><rect x="1981" y="1321" width="1" height="1" fill-opacity="0.04"/><rect x="2246" y="1070" width="1.5" height="1" fill-opacity="0.02"/><rect x="2143" y="1138" width="1" height="1" fill-opacity="0.04"/><rect x="1982" y="1081" width="2" height="1" fill-opacity="0.08"/><rect x="1998" y="1221" width="1.5" height="1" fill-opacity="0.08"/><rect x="2008" y="1093" width="1" height="1" fill-opacity="0.05"/><rect x="2279" y="999" width="1" height="1" fill-opacity="0.04"/><rect x="2223" y="1171" width="1.5" height="1" fill-opacity="0.08"/><rect x="2227" y="862" width="1" height="1" fill-opacity="0.07"/><rect x="2275" y="1290" width="1" height="1" fill-opacity="0.04"/><rect x="2351" y="1113" width="1" height="1" fill-opacity="0.08"/><rect x="2005" y="1222" width="1.5" height="1" fill-opacity="0.04"/><rect x="2117" y="1182" width="1" height="1" fill-opacity="0.04"/><rect x="2112" y="1128" width="1.5" height="1" fill-opacity="0.04"/><rect x="2060" y="841" width="2" height="1" fill-opacity="0.05"/><rect x="2328" y="1349" width="2" height="1" fill-opacity="0.05"/><rect x="2258" y="1378" width="1" height="1" fill-opacity="0.06"/><rect x="2021" y="946" width="2" height="1" fill-opacity="0.03"/><rect x="2000" y="840" width="1" height="1" fill-opacity="0.05"/><rect x="2052" y="1027" width="2" height="1" fill-opacity="0.02"/><rect x="2022" y="858" width="2" height="1" fill-opacity="0.02"/><rect x="2322" y="853" width="1" height="1" fill-opacity="0.02"/><rect x="2327" y="910" width="2" height="1" fill-opacity="0.04"/><rect x="2287" y="1197" width="2" height="1" fill-opacity="0.05"/><rect x="1998" y="1000" width="1" height="1" fill-opacity="0.05"/><rect x="2356" y="1359" width="1" height="1" fill-opacity="0.06"/><rect x="2255" y="1004" width="2" height="1" fill-opacity="0.06"/><rect x="2347" y="1088" width="1.5" height="1" fill-opacity="0.06"/><rect x="2312" y="1116" width="1" height="1" fill-opacity="0.06"/><rect x="2053" y="1234" width="1" height="1" fill-opacity="0.07"/><rect x="2230" y="1027" width="2" height="1" fill-opacity="0.05"/><rect x="2109" y="953" width="1.5" height="1" fill-opacity="0.05"/><rect x="2010" y="919" width="1" height="1" fill-opacity="0.08"/><rect x="2053" y="1289" width="1" height="1" fill-opacity="0.06"/><rect x="2177" y="959" width="2" height="1" fill-opacity="0.05"/><rect x="2055" y="1140" width="1" height="1" fill-opacity="0.02"/><rect x="2306" y="1200" width="1" height="1" fill-opacity="0.07"/><rect x="2311" y="1127" width="1" height="1" fill-opacity="0.07"/><rect x="2216" y="1358" width="2" height="1" fill-opacity="0.05"/><rect x="2298" y="1038" width="1" height="1" fill-opacity="0.03"/><rect x="2190" y="1254" width="1" height="1" fill-opacity="0.03"/><rect x="2127" y="845" width="1" height="1" fill-opacity="0.02"/><rect x="2149" y="886" width="1" height="1" fill-opacity="0.02"/><rect x="2214" y="1308" width="1.5" height="1" fill-opacity="0.05"/><rect x="2032" y="1237" width="1" height="1" fill-opacity="0.04"/><rect x="2296" y="887" width="1.5" height="1" fill-opacity="0.04"/><rect x="2254" y="842" width="1" height="1" fill-opacity="0.06"/><rect x="2107" y="1002" width="1" height="1" fill-opacity="0.06"/><rect x="2336" y="1197" width="1" height="1" fill-opacity="0.04"/><rect x="2243" y="830" width="2" height="1" fill-opacity="0.08"/><rect x="2010" y="830" width="1.5" height="1" fill-opacity="0.02"/><rect x="2038" y="1129" width="2" height="1" fill-opacity="0.04"/><rect x="2300" y="1149" width="1.5" height="1" fill-opacity="0.04"/><rect x="2345" y="826" width="1" height="1" fill-opacity="0.04"/><rect x="2160" y="1090" width="1" height="1" fill-opacity="0.02"/><rect x="1994" y="1167" width="2" height="1" fill-opacity="0.06"/><rect x="2303" y="1362" width="2" height="1" fill-opacity="0.07"/><rect x="2122" y="1309" width="1" height="1" fill-opacity="0.06"/><rect x="2109" y="1115" width="1" height="1" fill-opacity="0.04"/><rect x="2201" y="843" width="1.5" height="1" fill-opacity="0.03"/><rect x="2256" y="1004" width="1.5" height="1" fill-opacity="0.05"/><rect x="2090" y="1007" width="1" height="1" fill-opacity="0.05"/><rect x="1972" y="1076" width="1" height="1" fill-opacity="0.08"/><rect x="2218" y="1227" width="2" height="1" fill-opacity="0.03"/><rect x="2074" y="1099" width="1" height="1" fill-opacity="0.04"/><rect x="2363" y="837" width="1" height="1" fill-opacity="0.05"/><rect x="2315" y="1253" width="1" height="1" fill-opacity="0.06"/><rect x="2110" y="976" width="1" height="1" fill-opacity="0.07"/><rect x="2238" y="989" width="1.5" height="1" fill-opacity="0.07"/><rect x="2169" y="1175" width="2" height="1" fill-opacity="0.04"/><rect x="2098" y="1214" width="2" height="1" fill-opacity="0.06"/><rect x="2167" y="1321" width="1.5" height="1" fill-opacity="0.07"/><rect x="2025" y="933" width="2" height="1" fill-opacity="0.08"/><rect x="2127" y="1041" width="1" height="1" fill-opacity="0.07"/><rect x="2200" y="899" width="1.5" height="1" fill-opacity="0.07"/><rect x="2256" y="1128" width="1.5" height="1" fill-opacity="0.08"/><rect x="1994" y="925" width="1" height="1" fill-opacity="0.08"/><rect x="2086" y="1017" width="2" height="1" fill-opacity="0.05"/><rect x="2254" y="1336" width="1.5" height="1" fill-opacity="0.07"/><rect x="2325" y="973" width="1" height="1" fill-opacity="0.04"/><rect x="2269" y="1170" width="1" height="1" fill-opacity="0.04"/><rect x="2052" y="1043" width="1.5" height="1" fill-opacity="0.03"/><rect x="2311" y="1182" width="1" height="1" fill-opacity="0.03"/><rect x="2351" y="1156" width="1.5" height="1" fill-opacity="0.02"/><rect x="2253" y="821" width="1" height="1" fill-opacity="0.04"/><rect x="2221" y="1337" width="1.5" height="1" fill-opacity="0.03"/><rect x="2313" y="833" width="1.5" height="1" fill-opacity="0.05"/><rect x="2034" y="1303" width="1" height="1" fill-opacity="0.07"/><rect x="2216" y="1006" width="2" height="1" fill-opacity="0.05"/><rect x="2067" y="1078" width="1.5" height="1" fill-opacity="0.02"/><rect x="2191" y="1373" width="1.5" height="1" fill-opacity="0.02"/><rect x="2027" y="828" width="1" height="1" fill-opacity="0.03"/><rect x="2108" y="1021" width="1" height="1" fill-opacity="0.04"/><rect x="2228" y="1156" width="1.5" height="1" fill-opacity="0.04"/><rect x="2291" y="1086" width="1.5" height="1" fill-opacity="0.02"/><rect x="2226" y="1127" width="1.5" height="1" fill-opacity="0.07"/><rect x="2109" y="1116" width="1.5" height="1" fill-opacity="0.04"/><rect x="1968" y="1085" width="1.5" height="1" fill-opacity="0.06"/><rect x="2025" y="1171" width="1" height="1" fill-opacity="0.04"/><rect x="2341" y="1169" width="1" height="1" fill-opacity="0.02"/><rect x="2187" y="920" width="1.5" height="1" fill-opacity="0.08"/><rect x="2261" y="1325" width="1" height="1" fill-opacity="0.08"/><rect x="2176" y="1015" width="2" height="1" fill-opacity="0.07"/><rect x="2359" y="1098" width="1.5" height="1" fill-opacity="0.06"/><rect x="2326" y="1037" width="1" height="1" fill-opacity="0.03"/><rect x="2007" y="1230" width="2" height="1" fill-opacity="0.02"/><rect x="2235" y="1015" width="2" height="1" fill-opacity="0.04"/><rect x="2129" y="1335" width="1" height="1" fill-opacity="0.08"/><rect x="1976" y="830" width="1" height="1" fill-opacity="0.07"/><rect x="2057" y="932" width="1.5" height="1" fill-opacity="0.07"/><rect x="2084" y="1377" width="1" height="1" fill-opacity="0.03"/><rect x="2156" y="1343" width="1" height="1" fill-opacity="0.07"/><rect x="2295" y="977" width="2" height="1" fill-opacity="0.04"/><rect x="2315" y="958" width="2" height="1" fill-opacity="0.04"/><rect x="2049" y="847" width="1.5" height="1" fill-opacity="0.07"/><rect x="1983" y="1253" width="2" height="1" fill-opacity="0.05"/><rect x="2311" y="1377" width="1" height="1" fill-opacity="0.04"/><rect x="2288" y="903" width="1" height="1" fill-opacity="0.08"/><rect x="2330" y="903" width="1" height="1" fill-opacity="0.07"/><rect x="2266" y="1079" width="2" height="1" fill-opacity="0.04"/><rect x="2100" y="1334" width="1.5" height="1" fill-opacity="0.07"/><rect x="2358" y="836" width="1" height="1" fill-opacity="0.04"/><rect x="1979" y="1102" width="2" height="1" fill-opacity="0.04"/><rect x="2245" y="1227" width="1.5" height="1" fill-opacity="0.02"/><rect x="1990" y="880" width="1" height="1" fill-opacity="0.08"/><rect x="2175" y="819" width="1" height="1" fill-opacity="0.03"/><rect x="2219" y="1125" width="1.5" height="1" fill-opacity="0.08"/><rect x="2302" y="1356" width="1" height="1" fill-opacity="0.02"/><rect x="2307" y="1364" width="1" height="1" fill-opacity="0.03"/><rect x="2074" y="918" width="1" height="1" fill-opacity="0.04"/><rect x="2352" y="928" width="1.5" height="1" fill-opacity="0.02"/><rect x="2071" y="1001" width="2" height="1" fill-opacity="0.02"/><rect x="2183" y="1126" width="1.5" height="1" fill-opacity="0.07"/><rect x="2125" y="997" width="1" height="1" fill-opacity="0.05"/><rect x="2120" y="1035" width="1" height="1" fill-opacity="0.05"/><rect x="2325" y="1175" width="1.5" height="1" fill-opacity="0.04"/><rect x="2243" y="1228" width="1" height="1" fill-opacity="0.08"/><rect x="2231" y="867" width="1" height="1" fill-opacity="0.06"/><rect x="2329" y="846" width="1.5" height="1" fill-opacity="0.07"/><rect x="2239" y="1067" width="2" height="1" fill-opacity="0.06"/><rect x="2293" y="1170" width="2" height="1" fill-opacity="0.06"/><rect x="2178" y="1211" width="1" height="1" fill-opacity="0.07"/><rect x="2256" y="1225" width="1.5" height="1" fill-opacity="0.07"/><rect x="2228" y="1198" width="1.5" height="1" fill-opacity="0.05"/><rect x="2068" y="1226" width="1.5" height="1" fill-opacity="0.05"/><rect x="2116" y="1229" width="1.5" height="1" fill-opacity="0.07"/><rect x="2181" y="1203" width="1" height="1" fill-opacity="0.03"/><rect x="2066" y="1223" width="1" height="1" fill-opacity="0.04"/><rect x="2182" y="1227" width="1" height="1" fill-opacity="0.03"/><rect x="2088" y="1216" width="1" height="1" fill-opacity="0.03"/><rect x="2130" y="1195" width="2" height="1" fill-opacity="0.07"/><rect x="2081" y="1181" width="1" height="1" fill-opacity="0.03"/><rect x="2141" y="1216" width="1.5" height="1" fill-opacity="0.05"/><rect x="2163" y="1176" width="2" height="1" fill-opacity="0.04"/><rect x="2224" y="1201" width="1" height="1" fill-opacity="0.04"/><rect x="2240" y="1180" width="1.5" height="1" fill-opacity="0.05"/><rect x="2172" y="1216" width="1.5" height="1" fill-opacity="0.05"/><rect x="2250" y="1188" width="1" height="1" fill-opacity="0.05"/><rect x="2193" y="1174" width="1.5" height="1" fill-opacity="0.03"/><rect x="2279" y="1188" width="2" height="1" fill-opacity="0.03"/><rect x="2073" y="1215" width="1" height="1" fill-opacity="0.07"/><rect x="2082" y="1237" width="1.5" height="1" fill-opacity="0.04"/><rect x="2280" y="1220" width="1" height="1" fill-opacity="0.04"/><rect x="2228" y="1191" width="1.5" height="1" fill-opacity="0.04"/><rect x="2138" y="1197" width="1" height="1" fill-opacity="0.05"/><rect x="2294" y="1230" width="1" height="1" fill-opacity="0.05"/><rect x="2216" y="1193" width="2" height="1" fill-opacity="0.02"/><rect x="2145" y="1207" width="1" height="1" fill-opacity="0.04"/><rect x="2077" y="1209" width="2" height="1" fill-opacity="0.07"/><rect x="2154" y="1203" width="2" height="1" fill-opacity="0.07"/><rect x="2149" y="1179" width="1" height="1" fill-opacity="0.06"/><rect x="2218" y="1222" width="1" height="1" fill-opacity="0.04"/><rect x="2281" y="1191" width="2" height="1" fill-opacity="0.04"/><rect x="2242" y="1178" width="1" height="1" fill-opacity="0.03"/><rect x="2193" y="1171" width="1" height="1" fill-opacity="0.04"/><rect x="2191" y="1174" width="1.5" height="1" fill-opacity="0.05"/><rect x="2171" y="1174" width="2" height="1" fill-opacity="0.05"/><rect x="2261" y="1180" width="1" height="1" fill-opacity="0.04"/><rect x="2268" y="1180" width="1" height="1" fill-opacity="0.04"/><rect x="2097" y="1208" width="1" height="1" fill-opacity="0.05"/><rect x="2128" y="1188" width="2" height="1" fill-opacity="0.07"/><rect x="2178" y="1199" width="1.5" height="1" fill-opacity="0.02"/><rect x="2112" y="1197" width="1.5" height="1" fill-opacity="0.04"/><rect x="2126" y="1179" width="1.5" height="1" fill-opacity="0.03"/><rect x="2283" y="1216" width="1" height="1" fill-opacity="0.05"/><rect x="2141" y="1226" width="1" height="1" fill-opacity="0.03"/><rect x="2232" y="1171" width="1.5" height="1" fill-opacity="0.02"/><rect x="2059" y="1185" width="1" height="1" fill-opacity="0.04"/><rect x="2228" y="1226" width="2" height="1" fill-opacity="0.05"/><rect x="2152" y="1221" width="1" height="1" fill-opacity="0.03"/><rect x="2064" y="1200" width="1" height="1" fill-opacity="0.05"/><rect x="2084" y="1232" width="2" height="1" fill-opacity="0.06"/><rect x="2095" y="1235" width="1" height="1" fill-opacity="0.05"/><rect x="2175" y="1217" width="1.5" height="1" fill-opacity="0.05"/><rect x="2250" y="1207" width="1" height="1" fill-opacity="0.02"/><rect x="2179" y="1203" width="1" height="1" fill-opacity="0.03"/><rect x="2288" y="1199" width="1.5" height="1" fill-opacity="0.05"/><rect x="2227" y="1201" width="1" height="1" fill-opacity="0.04"/><rect x="2281" y="1179" width="2" height="1" fill-opacity="0.02"/><rect x="2123" y="1186" width="1.5" height="1" fill-opacity="0.05"/><rect x="2227" y="1220" width="1.5" height="1" fill-opacity="0.04"/><rect x="2131" y="1229" width="1" height="1" fill-opacity="0.02"/><rect x="2148" y="1172" width="1.5" height="1" fill-opacity="0.04"/><rect x="2106" y="1208" width="2" height="1" fill-opacity="0.02"/><rect x="2087" y="1183" width="2" height="1" fill-opacity="0.04"/><rect x="2079" y="1228" width="1" height="1" fill-opacity="0.02"/><rect x="2299" y="1236" width="1.5" height="1" fill-opacity="0.05"/><rect x="2172" y="1171" width="1" height="1" fill-opacity="0.06"/><rect x="2100" y="1190" width="1" height="1" fill-opacity="0.04"/><rect x="2100" y="1203" width="1" height="1" fill-opacity="0.06"/><rect x="2195" y="1191" width="1" height="1" fill-opacity="0.05"/><rect x="2292" y="1194" width="1.5" height="1" fill-opacity="0.07"/><rect x="2063" y="1193" width="1" height="1" fill-opacity="0.04"/><rect x="2132" y="1195" width="1.5" height="1" fill-opacity="0.02"/><rect x="2252" y="1221" width="1" height="1" fill-opacity="0.04"/><rect x="2247" y="1212" width="1" height="1" fill-opacity="0.04"/><rect x="2060" y="1211" width="1" height="1" fill-opacity="0.04"/><rect x="2154" y="1229" width="1" height="1" fill-opacity="0.02"/><rect x="2140" y="1216" width="1" height="1" fill-opacity="0.02"/><rect x="2261" y="1231" width="1" height="1" fill-opacity="0.04"/><rect x="2115" y="1177" width="1" height="1" fill-opacity="0.03"/><rect x="2174" y="1208" width="2" height="1" fill-opacity="0.02"/><rect x="2111" y="1210" width="1.5" height="1" fill-opacity="0.02"/><rect x="2142" y="1184" width="1" height="1" fill-opacity="0.04"/><rect x="2297" y="1234" width="1" height="1" fill-opacity="0.06"/><rect x="2273" y="1171" width="2" height="1" fill-opacity="0.07"/><rect x="2248" y="1219" width="1" height="1" fill-opacity="0.03"/><rect x="2072" y="1182" width="1" height="1" fill-opacity="0.07"/><rect x="2156" y="1214" width="1" height="1" fill-opacity="0.02"/><rect x="2071" y="1210" width="1" height="1" fill-opacity="0.03"/><rect x="2255" y="1175" width="1" height="1" fill-opacity="0.04"/><rect x="2060" y="1213" width="1.5" height="1" fill-opacity="0.05"/><rect x="2136" y="1227" width="1" height="1" fill-opacity="0.04"/><rect x="2053" y="1236" width="2" height="1" fill-opacity="0.04"/><rect x="2058" y="1225" width="1" height="1" fill-opacity="0.02"/><rect x="2088" y="1194" width="1" height="1" fill-opacity="0.02"/><rect x="2281" y="1218" width="1" height="1" fill-opacity="0.05"/><rect x="2299" y="1225" width="2" height="1" fill-opacity="0.04"/><rect x="2181" y="1193" width="1" height="1" fill-opacity="0.02"/><rect x="2100" y="1214" width="2" height="1" fill-opacity="0.07"/><rect x="2073" y="1220" width="1" height="1" fill-opacity="0.04"/><rect x="2251" y="1204" width="2" height="1" fill-opacity="0.06"/><rect x="2084" y="1228" width="1" height="1" fill-opacity="0.07"/><rect x="2236" y="1228" width="1" height="1" fill-opacity="0.06"/><rect x="2159" y="1228" width="1.5" height="1" fill-opacity="0.06"/><rect x="2237" y="1212" width="1" height="1" fill-opacity="0.05"/><rect x="2067" y="1225" width="1" height="1" fill-opacity="0.06"/><rect x="2110" y="1211" width="2" height="1" fill-opacity="0.05"/><rect x="2194" y="1235" width="1" height="1" fill-opacity="0.07"/><rect x="2148" y="1225" width="1.5" height="1" fill-opacity="0.06"/><rect x="2256" y="1198" width="1.5" height="1" fill-opacity="0.02"/><rect x="2216" y="1233" width="1.5" height="1" fill-opacity="0.04"/><rect x="2051" y="1204" width="1" height="1" fill-opacity="0.02"/><rect x="2270" y="1203" width="1.5" height="1" fill-opacity="0.04"/><rect x="2164" y="1193" width="1.5" height="1" fill-opacity="0.03"/><rect x="2148" y="1203" width="1.5" height="1" fill-opacity="0.02"/><rect x="2072" y="1189" width="2" height="1" fill-opacity="0.05"/><rect x="2152" y="1208" width="1" height="1" fill-opacity="0.03"/><rect x="2221" y="1173" width="1" height="1" fill-opacity="0.06"/><rect x="2147" y="1193" width="1" height="1" fill-opacity="0.02"/></g>
<text x="130.80" y="89.80" font-size="29.50" textLength="255.32" lengthAdjust="spacingAndGlyphs" fill="#ffffff" font-weight="700">Transaction Order</text>
<text x="58.50" y="327.25" font-size="29.60" textLength="258.66" lengthAdjust="spacingAndGlyphs" fill="#485ca2" stroke="#485ca2" stroke-width="1.3">ORDER SUMMARY</text>
<text x="694.29" y="327.25" font-size="29.60" textLength="246.09" lengthAdjust="spacingAndGlyphs" fill="#485ca2" stroke="#485ca2" stroke-width="1.3">CONTACT DETAIL</text>
<text x="1328.94" y="327.25" font-size="29.60" textLength="223.25" lengthAdjust="spacingAndGlyphs" fill="#485ca2" stroke="#485ca2" stroke-width="1.3">BILLING DETAIL</text>
<text x="1964.93" y="327.25" font-size="29.60" textLength="217.21" lengthAdjust="spacingAndGlyphs" fill="#485ca2" stroke="#485ca2" stroke-width="1.3">ORDER STATUS</text>
<text x="58.61" y="776.65" font-size="29.60" textLength="237.97" lengthAdjust="spacingAndGlyphs" fill="#485ca2" stroke="#485ca2" stroke-width="1.3">TRAVELLER INFO</text>
<text x="59.03" y="982.55" font-size="29.60" textLength="280.63" lengthAdjust="spacingAndGlyphs" fill="#485ca2" stroke="#485ca2" stroke-width="1.3">PRICE BREAKDOWN</text>
<text x="59.01" y="425.65" font-size="28.60" textLength="213.82" lengthAdjust="spacingAndGlyphs" fill="#3d3d3d" stroke="#3d3d3d" stroke-width="0.7">Order Number :</text>
<text x="292.82" y="425.88" font-size="29.60" textLength="49.45" lengthAdjust="spacingAndGlyphs" fill="#3a3a3a" stroke="#3a3a3a" stroke-width="0.25">#23</text>
<text x="58.11" y="481.65" font-size="28.60" textLength="196.44" lengthAdjust="spacingAndGlyphs" fill="#3d3d3d" stroke="#3d3d3d" stroke-width="0.7">Booking Date :</text>
<text x="274.19" y="481.88" font-size="29.60" textLength="215.62" lengthAdjust="spacingAndGlyphs" fill="#3a3a3a" stroke="#3a3a3a" stroke-width="0.25">January 25, 2017</text>
<text x="59.97" y="537.15" font-size="28.60" textLength="76.44" lengthAdjust="spacingAndGlyphs" fill="#3d3d3d" stroke="#3d3d3d" stroke-width="0.7">Tour :</text>
<text x="155.10" y="537.38" font-size="29.60" textLength="351.67" lengthAdjust="spacingAndGlyphs" fill="#0f6fab" stroke="#0f6fab" stroke-width="0.25">Dubai – All Stunning Places</text>
<text x="59.99" y="593.15" font-size="28.60" textLength="168.34" lengthAdjust="spacingAndGlyphs" fill="#3d3d3d" stroke="#3d3d3d" stroke-width="0.7">Travel Date :</text>
<text x="247.89" y="593.38" font-size="29.60" textLength="215.62" lengthAdjust="spacingAndGlyphs" fill="#3a3a3a" stroke="#3a3a3a" stroke-width="0.25">January 16, 2017</text>
<text x="694.02" y="425.65" font-size="28.60" textLength="162.63" lengthAdjust="spacingAndGlyphs" fill="#3d3d3d" stroke="#3d3d3d" stroke-width="0.7">First Name :</text>
<text x="876.31" y="425.88" font-size="29.60" textLength="58.07" lengthAdjust="spacingAndGlyphs" fill="#3a3a3a" stroke="#3a3a3a" stroke-width="0.25">John</text>
<text x="694.05" y="481.65" font-size="28.60" textLength="158.97" lengthAdjust="spacingAndGlyphs" fill="#3d3d3d" stroke="#3d3d3d" stroke-width="0.7">Last Name :</text>
<text x="872.91" y="481.88" font-size="29.60" textLength="74.91" lengthAdjust="spacingAndGlyphs" fill="#3a3a3a" stroke="#3a3a3a" stroke-width="0.25">Smith</text>
<text x="694.08" y="537.15" font-size="28.60" textLength="88.69" lengthAdjust="spacingAndGlyphs" fill="#3d3d3d" stroke="#3d3d3d" stroke-width="0.7">Email :</text>
<text x="802.71" y="537.38" font-size="29.60" textLength="308.47" lengthAdjust="spacingAndGlyphs" fill="#3a3a3a" stroke="#3a3a3a" stroke-width="0.25">demo@goodlayers.com</text>
<text x="694.06" y="593.15" font-size="28.60" textLength="100.83" lengthAdjust="spacingAndGlyphs" fill="#3d3d3d" stroke="#3d3d3d" stroke-width="0.7">Phone :</text>
<text x="814.78" y="593.38" font-size="29.60" textLength="63.10" lengthAdjust="spacingAndGlyphs" fill="#3a3a3a" stroke="#3a3a3a" stroke-width="0.25">4444</text>
<text x="694.93" y="648.85" font-size="28.60" textLength="123.06" lengthAdjust="spacingAndGlyphs" fill="#3d3d3d" stroke="#3d3d3d" stroke-width="0.7">Country :</text>
<text x="837.76" y="649.08" font-size="29.60" textLength="59.91" lengthAdjust="spacingAndGlyphs" fill="#3a3a3a" stroke="#3a3a3a" stroke-width="0.25">dddf</text>
<text x="1329.62" y="425.65" font-size="28.60" textLength="162.63" lengthAdjust="spacingAndGlyphs" fill="#3d3d3d" stroke="#3d3d3d" stroke-width="0.7">First Name :</text>
<text x="1511.91" y="425.88" font-size="29.60" textLength="58.07" lengthAdjust="spacingAndGlyphs" fill="#3a3a3a" stroke="#3a3a3a" stroke-width="0.25">John</text>
<text x="1329.65" y="481.65" font-size="28.60" textLength="158.97" lengthAdjust="spacingAndGlyphs" fill="#3d3d3d" stroke="#3d3d3d" stroke-width="0.7">Last Name :</text>
<text x="1508.51" y="481.88" font-size="29.60" textLength="74.91" lengthAdjust="spacingAndGlyphs" fill="#3a3a3a" stroke="#3a3a3a" stroke-width="0.25">Smith</text>
<text x="1329.68" y="537.15" font-size="28.60" textLength="88.69" lengthAdjust="spacingAndGlyphs" fill="#3d3d3d" stroke="#3d3d3d" stroke-width="0.7">Email :</text>
<text x="1438.31" y="537.38" font-size="29.60" textLength="308.47" lengthAdjust="spacingAndGlyphs" fill="#3a3a3a" stroke="#3a3a3a" stroke-width="0.25">demo@goodlayers.com</text>
<text x="1329.66" y="593.15" font-size="28.60" textLength="100.83" lengthAdjust="spacingAndGlyphs" fill="#3d3d3d" stroke="#3d3d3d" stroke-width="0.7">Phone :</text>
<text x="1450.38" y="593.38" font-size="29.60" textLength="63.10" lengthAdjust="spacingAndGlyphs" fill="#3a3a3a" stroke="#3a3a3a" stroke-width="0.25">4444</text>
<text x="1330.53" y="648.85" font-size="28.60" textLength="123.06" lengthAdjust="spacingAndGlyphs" fill="#3d3d3d" stroke="#3d3d3d" stroke-width="0.7">Country :</text>
<text x="1473.36" y="649.08" font-size="29.60" textLength="59.91" lengthAdjust="spacingAndGlyphs" fill="#3a3a3a" stroke="#3a3a3a" stroke-width="0.25">dddf</text>
<text x="59.28" y="875.85" font-size="28.60" textLength="157.59" lengthAdjust="spacingAndGlyphs" fill="#3d3d3d" stroke="#3d3d3d" stroke-width="0.7">Traveller 1 :</text>
<text x="235.51" y="876.08" font-size="29.60" textLength="59.88" lengthAdjust="spacingAndGlyphs" fill="#3a3a3a" stroke="#3a3a3a" stroke-width="0.25">ss ss</text>
<text x="59.29" y="1081.55" font-size="28.60" textLength="263.35" lengthAdjust="spacingAndGlyphs" fill="#3d3d3d" stroke="#3d3d3d" stroke-width="0.7">Traveller Base Price</text>
<text x="349.67" y="1081.78" font-size="29.60" textLength="130.80" lengthAdjust="spacingAndGlyphs" fill="#3a3a3a" stroke="#3a3a3a" stroke-width="0.25">1 x $1,200</text>
<text x="1778.83" y="1081.78" font-size="29.60" textLength="124.75" lengthAdjust="spacingAndGlyphs" fill="#3a3a3a" stroke="#3a3a3a" stroke-width="0.25">$1,200.00</text>
<text x="1205.93" y="1198.85" font-size="28.60" textLength="198.52" lengthAdjust="spacingAndGlyphs" fill="#3d3d3d" stroke="#3d3d3d" stroke-width="0.7">Sub Total Price</text>
<text x="1778.83" y="1199.08" font-size="29.60" textLength="124.75" lengthAdjust="spacingAndGlyphs" fill="#3a3a3a" stroke="#3a3a3a" stroke-width="0.25">$1,200.00</text>
<text x="1206.40" y="1259.35" font-size="28.60" textLength="113.92" lengthAdjust="spacingAndGlyphs" fill="#3d3d3d" stroke="#3d3d3d" stroke-width="0.7">Tax Rate</text>
<text x="1865.18" y="1259.58" font-size="29.60" textLength="38.49" lengthAdjust="spacingAndGlyphs" fill="#3a3a3a" stroke="#3a3a3a" stroke-width="0.25">9%</text>
<text x="1206.40" y="1319.95" font-size="28.60" textLength="106.63" lengthAdjust="spacingAndGlyphs" fill="#3d3d3d" stroke="#3d3d3d" stroke-width="0.7">Tax Due</text>
<text x="1802.72" y="1320.17" font-size="29.60" textLength="100.84" lengthAdjust="spacingAndGlyphs" fill="#3a3a3a" stroke="#3a3a3a" stroke-width="0.25">$108.00</text>
<text x="1206.36" y="1451.85" font-size="28.60" textLength="66.78" lengthAdjust="spacingAndGlyphs" fill="#3d3d3d" stroke="#3d3d3d" stroke-width="0.7">Total</text>
<text x="1778.83" y="1452.08" font-size="29.60" textLength="124.75" lengthAdjust="spacingAndGlyphs" fill="#3a3a3a" stroke="#3a3a3a" stroke-width="0.25">$1,308.00</text>
<text x="1992.40" y="453.30" font-size="28.00" textLength="118.15" lengthAdjust="spacingAndGlyphs" fill="#5c5c5c">Approved</text>
<text x="2079.42" y="566.00" font-size="22.50" textLength="171.44" lengthAdjust="spacingAndGlyphs" fill="#ffffff" font-weight="700">UPDATE STATUS</text>
<text x="1964.47" y="738.00" font-size="29.60" textLength="315.17" lengthAdjust="spacingAndGlyphs" fill="#1f252e" font-weight="700">Bank Payment Receipt</text>
<text x="1965.62" y="1455.65" font-size="28.60" textLength="241.11" lengthAdjust="spacingAndGlyphs" fill="#3d3d3d" stroke="#3d3d3d" stroke-width="0.7">Submission Date :</text>
<text x="2233.09" y="1455.88" font-size="29.60" textLength="113.61" lengthAdjust="spacingAndGlyphs" fill="#3a3a3a" stroke="#3a3a3a" stroke-width="0.25">2017-01-</text>
<text x="1963.98" y="1490.97" font-size="29.60" textLength="147.46" lengthAdjust="spacingAndGlyphs" fill="#3a3a3a" stroke="#3a3a3a" stroke-width="0.25">26 10:11:11</text>
<text x="1964.16" y="1547.65" font-size="28.60" textLength="248.76" lengthAdjust="spacingAndGlyphs" fill="#3d3d3d" stroke="#3d3d3d" stroke-width="0.7">Payment Method :</text>
<text x="2238.74" y="1547.88" font-size="29.60" textLength="90.33" lengthAdjust="spacingAndGlyphs" fill="#3a3a3a" stroke="#3a3a3a" stroke-width="0.25">receipt</text>
<text x="1966.08" y="1603.35" font-size="28.60" textLength="209.66" lengthAdjust="spacingAndGlyphs" fill="#3d3d3d" stroke="#3d3d3d" stroke-width="0.7">Transaction ID :</text>
<text x="2202.46" y="1603.58" font-size="29.60" textLength="86.16" lengthAdjust="spacingAndGlyphs" fill="#3a3a3a" stroke="#3a3a3a" stroke-width="0.25">ddddd</text>
<text x="2014.87" y="862.70" font-size="32.77" textLength="53.89" lengthAdjust="spacingAndGlyphs" fill="#000" font-family="Liberation Serif" stroke="#000" stroke-width="1.0">DBS</text>
<text x="2014.26" y="884.70" font-size="14.61" textLength="75.21" lengthAdjust="spacingAndGlyphs" fill="#444">DBS Bank Ltd</text>
<text x="2014.98" y="905.80" font-size="15.32" textLength="164.26" lengthAdjust="spacingAndGlyphs" fill="#222">TRANSACTION RECEIPT</text>
<text x="1987.59" y="928.00" font-size="11.49" textLength="24.58" lengthAdjust="spacingAndGlyphs" fill="#3a3a3a">Date</text>
<text x="2107.13" y="928.00" font-size="11.49" textLength="24.33" lengthAdjust="spacingAndGlyphs" fill="#3a3a3a">Time</text>
<text x="2183.61" y="928.00" font-size="11.49" textLength="43.03" lengthAdjust="spacingAndGlyphs" fill="#3a3a3a">Location</text>
<text x="1971.87" y="946.05" font-size="17.86" textLength="93.75" lengthAdjust="spacingAndGlyphs" fill="#141414" font-family="Liberation Mono" stroke="#141414" stroke-width="0.3">13/07/2009</text>
<text x="2095.62" y="946.05" font-size="17.86" textLength="44.79" lengthAdjust="spacingAndGlyphs" fill="#141414" font-family="Liberation Mono" stroke="#141414" stroke-width="0.3">18:31</text>
<text x="2169.62" y="946.05" font-size="17.86" textLength="104.23" lengthAdjust="spacingAndGlyphs" fill="#141414" font-family="Liberation Mono" stroke="#141414" stroke-width="0.3">REDHILL MRT</text>
<text x="1987.60" y="961.80" font-size="11.63" textLength="21.14" lengthAdjust="spacingAndGlyphs" fill="#3a3a3a">Ref.</text>
<text x="2047.73" y="961.80" font-size="11.63" textLength="57.29" lengthAdjust="spacingAndGlyphs" fill="#3a3a3a">Transaction</text>
<text x="2159.70" y="961.80" font-size="11.63" textLength="38.86" lengthAdjust="spacingAndGlyphs" fill="#3a3a3a">Amount</text>
<text x="2289.51" y="961.80" font-size="11.63" textLength="51.12" lengthAdjust="spacingAndGlyphs" fill="#3a3a3a">Last Used</text>
<text x="1972.13" y="979.25" font-size="17.56" textLength="36.84" lengthAdjust="spacingAndGlyphs" fill="#141414" font-family="Liberation Mono" stroke="#141414" stroke-width="0.3">4060</text>
<text x="2028.67" y="979.25" font-size="17.56" textLength="73.82" lengthAdjust="spacingAndGlyphs" fill="#141414" font-family="Liberation Mono" stroke="#141414" stroke-width="0.3">TRANSFER</text>
<text x="2142.57" y="979.25" font-size="17.56" textLength="55.40" lengthAdjust="spacingAndGlyphs" fill="#141414" font-family="Liberation Mono" stroke="#141414" stroke-width="0.3">$10.00</text>
<text x="2275.67" y="979.25" font-size="17.56" textLength="74.95" lengthAdjust="spacingAndGlyphs" fill="#141414" font-family="Liberation Mono" stroke="#141414" stroke-width="0.3">11/07/09</text>
<text x="1987.59" y="996.00" font-size="11.35" textLength="27.22" lengthAdjust="spacingAndGlyphs" fill="#3a3a3a">From</text>
<text x="2188.23" y="996.00" font-size="11.35" textLength="11.51" lengthAdjust="spacingAndGlyphs" fill="#3a3a3a">To</text>
<text x="1972.37" y="1013.65" font-size="17.86" textLength="65.07" lengthAdjust="spacingAndGlyphs" fill="#141414" font-family="Liberation Mono" stroke="#141414" stroke-width="0.3">SAVINGS</text>
<text x="2171.27" y="1013.65" font-size="17.86" textLength="65.17" lengthAdjust="spacingAndGlyphs" fill="#141414" font-family="Liberation Mono" stroke="#141414" stroke-width="0.3">SAVINGS</text>
<text x="1972.12" y="1030.45" font-size="17.86" textLength="103.16" lengthAdjust="spacingAndGlyphs" fill="#141414" font-family="Liberation Mono" stroke="#141414" stroke-width="0.3">053-38754-3</text>
<text x="2170.76" y="1030.45" font-size="17.86" textLength="104.43" lengthAdjust="spacingAndGlyphs" fill="#141414" font-family="Liberation Mono" stroke="#141414" stroke-width="0.3">131-13995-0</text>
<text x="1988.02" y="1046.60" font-size="11.35" textLength="54.73" lengthAdjust="spacingAndGlyphs" fill="#3a3a3a">Ledger Bal</text>
<text x="2188.40" y="1046.60" font-size="11.35" textLength="60.09" lengthAdjust="spacingAndGlyphs" fill="#3a3a3a">Available Bal</text>
<text x="1971.62" y="1080.95" font-size="17.71" textLength="321.12" lengthAdjust="spacingAndGlyphs" fill="#141414" font-family="Liberation Mono" stroke="#141414" stroke-width="0.3">EFFECTIVE 1 JULY 2009, SGD DEPOSIT</text>
<text x="1971.35" y="1097.85" font-size="17.86" textLength="296.94" lengthAdjust="spacingAndGlyphs" fill="#141414" font-family="Liberation Mono" stroke="#141414" stroke-width="0.3">INTEREST RATES WILL BE REVISED.</text>
<text x="1971.61" y="1131.45" font-size="17.71" textLength="313.48" lengthAdjust="spacingAndGlyphs" fill="#141414" font-family="Liberation Mono" stroke="#141414" stroke-width="0.3">PLEASE VISIT US AT WWW.DBS.COM/SG</text>
<text x="1971.34" y="1148.25" font-size="17.71" textLength="164.39" lengthAdjust="spacingAndGlyphs" fill="#141414" font-family="Liberation Mono" stroke="#141414" stroke-width="0.3">FOR MORE DETAILS.</text>
<text x="2066.44" y="1326.90" font-size="12.06" textLength="188.34" lengthAdjust="spacingAndGlyphs" fill="#333">Call DBS Phone Banking or enquire</text>
<text x="2032.87" y="1339.50" font-size="11.49" textLength="255.21" lengthAdjust="spacingAndGlyphs" fill="#333">DBS products &amp; services on 1800-111-1111.</text>
<text x="2063.45" y="1352.40" font-size="11.49" textLength="195.03" lengthAdjust="spacingAndGlyphs" fill="#333">Call POSB Phone Banking or enquire</text>
<text x="2031.70" y="1364.80" font-size="11.91" textLength="258.11" lengthAdjust="spacingAndGlyphs" fill="#333">POSB products &amp; services on 1800-339-6666</text>
</svg>
</body>
</html>
